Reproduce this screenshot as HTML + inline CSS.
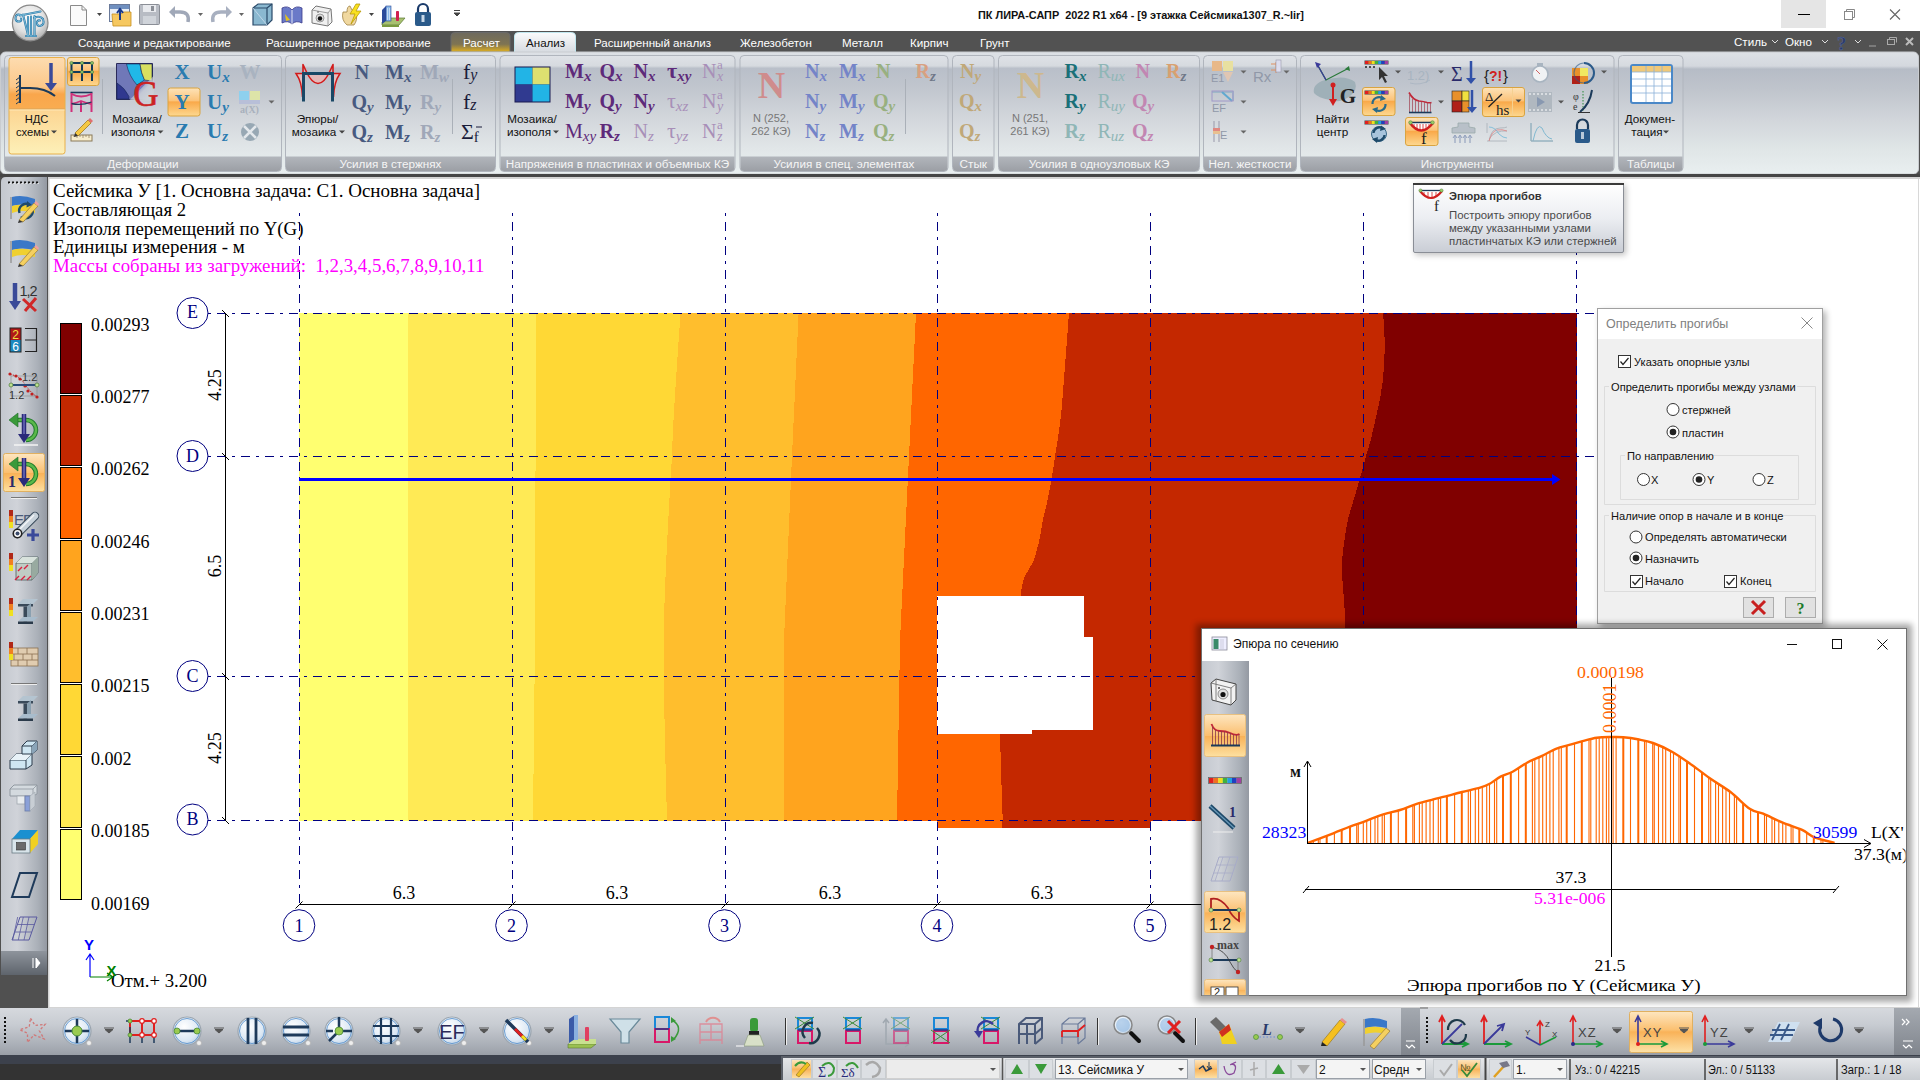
<!DOCTYPE html>
<html><head><meta charset="utf-8">
<style>
*{margin:0;padding:0;box-sizing:border-box}
html,body{width:1920px;height:1080px;overflow:hidden;background:#505050;font-family:"Liberation Sans",sans-serif;position:relative}
.a{position:absolute}
svg{position:absolute;overflow:visible}

</style></head>
<body>
<svg style="left:0;top:0" width="1920" height="180" viewBox="0 0 1920 180">
<defs>
<linearGradient id="gRib" x1="0" y1="0" x2="0" y2="1">
<stop offset="0" stop-color="#dde1e6"/><stop offset="0.115" stop-color="#d4d8de"/><stop offset="0.14" stop-color="#b6bcc6"/><stop offset="0.3" stop-color="#bfc4cc"/><stop offset="0.56" stop-color="#d2d6db"/><stop offset="0.8" stop-color="#e0e6e7"/><stop offset="1" stop-color="#e9eff0"/></linearGradient>
<linearGradient id="gGrp" x1="0" y1="0" x2="0" y2="1">
<stop offset="0" stop-color="#dfe2e7"/><stop offset="0.09" stop-color="#d6dadf"/><stop offset="0.11" stop-color="#b9bfc9"/><stop offset="0.28" stop-color="#c1c6ce"/><stop offset="0.55" stop-color="#d3d7dc"/><stop offset="0.8" stop-color="#e1e6e8"/><stop offset="1" stop-color="#e8eeef"/></linearGradient>
<linearGradient id="gLab" x1="0" y1="0" x2="0" y2="1">
<stop offset="0" stop-color="#b2b6bc"/><stop offset="1" stop-color="#9c9fa5"/></linearGradient>
<linearGradient id="gOr" x1="0" y1="0" x2="0" y2="1">
<stop offset="0" stop-color="#fde3b8"/><stop offset="0.45" stop-color="#fbc37a"/><stop offset="0.5" stop-color="#f9a94a"/><stop offset="1" stop-color="#fdd890"/></linearGradient>
<linearGradient id="gOrBig" x1="0" y1="0" x2="0" y2="1">
<stop offset="0" stop-color="#fddcb0"/><stop offset="0.3" stop-color="#fcc88a"/><stop offset="0.38" stop-color="#f9a64c"/><stop offset="0.53" stop-color="#f9ac50"/><stop offset="0.54" stop-color="#fcd592"/><stop offset="1" stop-color="#fdf0b8"/></linearGradient>
<linearGradient id="gTabR" x1="0" y1="0" x2="0" y2="1">
<stop offset="0" stop-color="#6e6a5e"/><stop offset="0.6" stop-color="#7f7452"/><stop offset="1" stop-color="#e0b020"/></linearGradient>
<linearGradient id="gTabA" x1="0" y1="0" x2="0" y2="1">
<stop offset="0" stop-color="#fafbfc"/><stop offset="1" stop-color="#d5d9df"/></linearGradient>
</defs>
<rect x="0" y="0" width="1920" height="31" fill="#fff"/>
<rect x="1781" y="0" width="45" height="28" fill="#e5e5e5"/>
<path d="M1798 14.5H1810" stroke="#000" stroke-width="1"/>
<rect x="1844.5" y="11.5" width="8" height="8" fill="none" stroke="#888"/><path d="M1846.5 11.5V9.5H1854.5V17.5H1852.5" fill="none" stroke="#888"/>
<path d="M1890 9.5L1900 19.5M1900 9.5L1890 19.5" stroke="#666" stroke-width="1.1"/>
<text x="978" y="19" font-family="Liberation Sans" font-weight="bold" font-size="10.8" fill="#111" textLength="326" lengthAdjust="spacingAndGlyphs" xml:space="preserve">ПК ЛИРА-САПР  2022 R1 x64 - [9 этажка Сейсмика1307_R.~lir]</text>
<rect x="0" y="31" width="1920" height="21" fill="#525252"/>
<path d="M451 52V36Q451 32.5 455 32.5H506Q510 32.5 510 36V52Z" fill="url(#gTabR)" stroke="#6a6a6a"/>
<path d="M514.5 53V36Q514.5 32.5 518.5 32.5H571.5Q575.5 32.5 575.5 36V53Z" fill="url(#gTabA)" stroke="#bfe6ee"/>
<text x="78" y="47" font-family="Liberation Sans" font-size="11.6" fill="#fff">Создание и редактирование</text>
<text x="266" y="47" font-family="Liberation Sans" font-size="11.6" fill="#fff">Расширенное редактирование</text>
<text x="463" y="47" font-family="Liberation Sans" font-size="11.6" fill="#fff">Расчет</text>
<text x="526" y="47" font-family="Liberation Sans" font-size="11.6" fill="#111">Анализ</text>
<text x="594" y="47" font-family="Liberation Sans" font-size="11.6" fill="#fff">Расширенный анализ</text>
<text x="740" y="47" font-family="Liberation Sans" font-size="11.6" fill="#fff">Железобетон</text>
<text x="842" y="47" font-family="Liberation Sans" font-size="11.6" fill="#fff">Металл</text>
<text x="910" y="47" font-family="Liberation Sans" font-size="11.6" fill="#fff">Кирпич</text>
<text x="980" y="47" font-family="Liberation Sans" font-size="11.6" fill="#fff">Грунт</text>
<text x="1734" y="46" font-family="Liberation Sans" font-size="11.6" fill="#fff">Стиль</text>
<text x="1785" y="46" font-family="Liberation Sans" font-size="11.6" fill="#fff">Окно</text>
<path d="M1772 40L1775 43L1778 40M1822 40L1825 43L1828 40M1855 40L1858 43L1861 40" fill="none" stroke="#ddd" stroke-width="1"/>
<text x="1837" y="49.5" font-family="Liberation Serif" font-weight="bold" font-size="19" fill="#2a3a6a" stroke="#5a6a9a" stroke-width="0.5">?</text>
<path d="M1869 46H1876" stroke="#888" stroke-width="1.5"/><rect x="1887.5" y="39.5" width="7" height="5" fill="none" stroke="#aaa"/><path d="M1889.5 39.5V37.5H1896.5V42.5" fill="none" stroke="#aaa"/>
<path d="M1906 38L1913 45M1913 38L1906 45" stroke="#bbb" stroke-width="2"/>
<rect x="0.5" y="52" width="1918" height="122" rx="5" fill="url(#gRib)" stroke="#c9ccd0"/>
<rect x="0" y="174" width="1920" height="4" fill="#454545"/>
<rect x="4.5" y="55.5" width="277.0" height="116" rx="4" fill="url(#gGrp)" stroke="#b0b5bd"/>
<path d="M5.0 156.5H281.0V167.5Q281.0 171 277.5 171H8.5Q5.0 171 5.0 167.5Z" fill="url(#gLab)"/>
<text x="143.0" y="168" text-anchor="middle" font-family="Liberation Sans" font-size="11.7" fill="#f5f5f5">Деформации</text>
<rect x="285.5" y="55.5" width="210.0" height="116" rx="4" fill="url(#gGrp)" stroke="#b0b5bd"/>
<path d="M286.0 156.5H495.0V167.5Q495.0 171 491.5 171H289.5Q286.0 171 286.0 167.5Z" fill="url(#gLab)"/>
<text x="390.5" y="168" text-anchor="middle" font-family="Liberation Sans" font-size="11.7" fill="#f5f5f5">Усилия в стержнях</text>
<rect x="500" y="55.5" width="235" height="116" rx="4" fill="url(#gGrp)" stroke="#b0b5bd"/>
<path d="M500.5 156.5H734.5V167.5Q734.5 171 731 171H504Q500.5 171 500.5 167.5Z" fill="url(#gLab)"/>
<text x="617.5" y="168" text-anchor="middle" font-family="Liberation Sans" font-size="11.7" fill="#f5f5f5">Напряжения в пластинах и объемных КЭ</text>
<rect x="740" y="55.5" width="208" height="116" rx="4" fill="url(#gGrp)" stroke="#b0b5bd"/>
<path d="M740.5 156.5H947.5V167.5Q947.5 171 944 171H744Q740.5 171 740.5 167.5Z" fill="url(#gLab)"/>
<text x="844.0" y="168" text-anchor="middle" font-family="Liberation Sans" font-size="11.7" fill="#f5f5f5">Усилия в спец. элементах</text>
<rect x="952.5" y="55.5" width="41.5" height="116" rx="4" fill="url(#gGrp)" stroke="#b0b5bd"/>
<path d="M953.0 156.5H993.5V167.5Q993.5 171 990 171H956.5Q953.0 171 953.0 167.5Z" fill="url(#gLab)"/>
<text x="973.25" y="168" text-anchor="middle" font-family="Liberation Sans" font-size="11.7" fill="#f5f5f5">Стык</text>
<rect x="998.5" y="55.5" width="201.0" height="116" rx="4" fill="url(#gGrp)" stroke="#b0b5bd"/>
<path d="M999.0 156.5H1199.0V167.5Q1199.0 171 1195.5 171H1002.5Q999.0 171 999.0 167.5Z" fill="url(#gLab)"/>
<text x="1099.0" y="168" text-anchor="middle" font-family="Liberation Sans" font-size="11.7" fill="#f5f5f5">Усилия в одноузловых КЭ</text>
<rect x="1203.5" y="55.5" width="93.0" height="116" rx="4" fill="url(#gGrp)" stroke="#b0b5bd"/>
<path d="M1204.0 156.5H1296.0V167.5Q1296.0 171 1292.5 171H1207.5Q1204.0 171 1204.0 167.5Z" fill="url(#gLab)"/>
<text x="1250.0" y="168" text-anchor="middle" font-family="Liberation Sans" font-size="11.7" fill="#f5f5f5">Нел. жесткости</text>
<rect x="1300.5" y="55.5" width="313.5" height="116" rx="4" fill="url(#gGrp)" stroke="#b0b5bd"/>
<path d="M1301.0 156.5H1613.5V167.5Q1613.5 171 1610 171H1304.5Q1301.0 171 1301.0 167.5Z" fill="url(#gLab)"/>
<text x="1457.25" y="168" text-anchor="middle" font-family="Liberation Sans" font-size="11.7" fill="#f5f5f5">Инструменты</text>
<rect x="1618.5" y="55.5" width="64.5" height="116" rx="4" fill="url(#gGrp)" stroke="#b0b5bd"/>
<path d="M1619.0 156.5H1682.5V167.5Q1682.5 171 1679 171H1622.5Q1619.0 171 1619.0 167.5Z" fill="url(#gLab)"/>
<text x="1650.75" y="168" text-anchor="middle" font-family="Liberation Sans" font-size="11.7" fill="#f5f5f5">Таблицы</text>
<rect x="9" y="57.5" width="56" height="96.5" rx="2.5" fill="url(#gOrBig)" stroke="#e8b04a"/>
<path d="M9.5 109H64.5" stroke="#d8a45a" stroke-width="1"/><path d="M9.5 110H64.5" stroke="#fde8b8" stroke-width="1"/>
<path d="M20 75V103" stroke="#1b3a5a" stroke-width="2"/>
<path d="M20 77L16 80M20 81L16 84M20 85L16 88M20 89L16 92M20 93L16 96M20 97L16 100M20 101L16 104" stroke="#1b3a5a" stroke-width="1"/>
<path d="M20 88H30Q45 88 55 96" fill="none" stroke="#1b3a5a" stroke-width="2.2"/>
<path d="M51 63V85" stroke="#3a4a9a" stroke-width="3.5"/><path d="M45 83L51 91L57 83Z" fill="#3a4a9a"/>
<text x="36.5" y="122.5" text-anchor="middle" font-family="Liberation Sans" font-size="11.2" fill="#111">НДС</text>
<text x="32.5" y="135.5" text-anchor="middle" font-family="Liberation Sans" font-size="11.2" fill="#111">схемы</text>
<path d="M51 130.5H57L54 133.5Z" fill="#444"/>
<rect x="67.5" y="57.5" width="31.5" height="28" rx="2.5" fill="url(#gOr)" stroke="#d9a441"/>
<path d="M71 63H92M71 72H92M71.5 63V81M82 63V81M92 63V81" fill="none" stroke="#133a5a" stroke-width="2"/>
<circle cx="71.5" cy="63" r="1.6" fill="#8fbf6a" stroke="#4a7a3a" stroke-width="0.6"/>
<circle cx="82" cy="63" r="1.6" fill="#8fbf6a" stroke="#4a7a3a" stroke-width="0.6"/>
<circle cx="92" cy="63" r="1.6" fill="#8fbf6a" stroke="#4a7a3a" stroke-width="0.6"/>
<circle cx="71.5" cy="72" r="1.6" fill="#8fbf6a" stroke="#4a7a3a" stroke-width="0.6"/>
<circle cx="82" cy="72" r="1.6" fill="#8fbf6a" stroke="#4a7a3a" stroke-width="0.6"/>
<circle cx="92" cy="72" r="1.6" fill="#8fbf6a" stroke="#4a7a3a" stroke-width="0.6"/>
<path d="M70.5 92.5H92.5" stroke="#1b3a5a" stroke-width="1.6"/>
<path d="M71.5 93V112M91.5 93V112M81 101V112" fill="none" stroke="#d0307a" stroke-width="2"/><path d="M71.5 94Q81 99 91.5 94M71.5 104Q76 103 81 101Q86 103 91.5 104" fill="none" stroke="#d0307a" stroke-width="1.8"/>
<path d="M71.5 103.5Q81 106 91.5 102" fill="none" stroke="#1b3a5a" stroke-width="1.3"/>
<rect x="71" y="135" width="21" height="6" fill="#f6eccc" stroke="#8a7a5a" stroke-width="1"/>
<path d="M74 135V137M77 135V138M80 135V137M83 135V138M86 135V137M89 135V138" stroke="#8a7a5a" stroke-width="0.7"/>
<path d="M75 133L88 120L91 123L78 136Z" fill="#f5c842" stroke="#a07a20" stroke-width="0.8"/><path d="M88 120L90 118L93 121L91 123Z" fill="#e07070"/><path d="M75 133L74 137L78 136Z" fill="#333"/>
<path d="M102.5 79V134" stroke="#aab0b8" stroke-width="1"/>
<defs><linearGradient id="gMosF" x1="0.3" y1="0.3" x2="0.85" y2="0.85"><stop offset="0" stop-color="#cdd2d8" stop-opacity="0"/><stop offset="0.55" stop-color="#cdd2d8" stop-opacity="0.9"/><stop offset="1" stop-color="#cdd2d8" stop-opacity="1"/></linearGradient></defs>
<path d="M116.5 63.5H152.5V99.5H116.5Z" fill="#7078b8" stroke="#2a2a5a" stroke-width="1"/>
<path d="M126.5 64H140Q141 73 144.5 80L137 85Q129 76 126.5 64Z" fill="#20b8e8" stroke="#1a2a5a" stroke-width="0.6"/>
<path d="M140 64H152V81L144.5 80Q141 73 140 64Z" fill="#d8e060" stroke="#1a2a5a" stroke-width="0.6"/>
<path d="M117 83Q125 88 129 96.5V99H117Z" fill="#30388f" stroke="#1a2a5a" stroke-width="0.6"/>
<path d="M129 100.5L153.5 76V100.5Z" fill="url(#gMosF)"/>
<text x="146" y="105.5" text-anchor="middle" font-family="Liberation Serif" font-size="35" fill="#cc2222" stroke="#cc2222" stroke-width="0.6">G</text>
<text x="137" y="122.5" text-anchor="middle" font-family="Liberation Sans" font-size="11.7" fill="#111">Мозаика/</text>
<text x="133" y="135.5" text-anchor="middle" font-family="Liberation Sans" font-size="11.7" fill="#111">изополя</text>
<path d="M157.5 130.5H163.5L160.5 133.5Z" fill="#444"/>
<rect x="168.0" y="88.0" width="32.0" height="28.0" rx="2.5" fill="url(#gOr)" stroke="#d9a441"/>
<text x="182" y="79" font-family="Liberation Serif" font-weight="bold" font-size="21" fill="#2a7bb0" text-anchor="middle">X</text>
<text x="182" y="108.5" font-family="Liberation Serif" font-weight="bold" font-size="21" fill="#2a7bb0" text-anchor="middle">Y</text>
<text x="182" y="138" font-family="Liberation Serif" font-weight="bold" font-size="21" fill="#2a7bb0" text-anchor="middle">Z</text>
<text x="207" y="79" font-family="Liberation Serif" font-weight="bold" font-size="21" fill="#2a7bb0" text-anchor="start">U<tspan font-style="italic" font-size="15" dy="3" fill="#2a7bb0">x</tspan></text>
<text x="207" y="108.5" font-family="Liberation Serif" font-weight="bold" font-size="21" fill="#2a7bb0" text-anchor="start">U<tspan font-style="italic" font-size="15" dy="3" fill="#2a7bb0">y</tspan></text>
<text x="207" y="138" font-family="Liberation Serif" font-weight="bold" font-size="21" fill="#2a7bb0" text-anchor="start">U<tspan font-style="italic" font-size="15" dy="3" fill="#2a7bb0">z</tspan></text>
<text x="250" y="79" font-family="Liberation Serif" font-weight="bold" font-size="21" fill="#a9b3c0" text-anchor="middle">W</text>
<rect x="239" y="91" width="10" height="9" fill="#8ed0ee"/><rect x="250" y="91" width="10" height="9" fill="#dde4a8"/><rect x="239" y="100" width="21" height="4" fill="#b8bfd8"/>
<text x="249.5" y="113" text-anchor="middle" font-family="Liberation Serif" font-weight="bold" font-size="10" fill="#a8b0bc">a(X)</text>
<circle cx="250" cy="132" r="9" fill="#98a8b4"/><path d="M244 126L256 138M256 126L244 138" stroke="#e4e8ec" stroke-width="2.5"/>
<path d="M268.5 100.5H274.5L271.5 103.5Z" fill="#666"/>
<path d="M306 73.5Q312 83.5 318 83.5Q324 83.5 330 73.5Z" fill="#e4b8b8"/><path d="M296 73.5H303V96Q302 82 296 73.5Z" fill="#e4c0c0"/><path d="M339.5 73.5H332.5V96Q334 82 339.5 73.5Z" fill="#e4c0c0"/>
<path d="M303 73V64.5L306.5 72Q312 83.5 318 83.5Q324 83.5 329.5 72L333 64.5V73" fill="none" stroke="#d21a1a" stroke-width="1.6" stroke-linejoin="round"/>
<path d="M303 73.5H296Q302 82 302.5 97M333 73.5H340Q334 82 333.5 97" fill="none" stroke="#d21a1a" stroke-width="1.5"/>
<path d="M303.5 101.5V73.5H332.5V101.5" fill="none" stroke="#1a4866" stroke-width="3"/>
<text x="317.5" y="122.5" text-anchor="middle" font-family="Liberation Sans" font-size="11.7" fill="#111">Эпюры/</text>
<text x="314" y="135.5" text-anchor="middle" font-family="Liberation Sans" font-size="11.7" fill="#111">мозаика</text>
<path d="M339 130.5H345L342 133.5Z" fill="#444"/>
<text x="362" y="78.5" font-family="Liberation Serif" font-weight="bold" font-size="20" fill="#485a80" text-anchor="middle">N</text>
<text x="351.5" y="109" font-family="Liberation Serif" font-weight="bold" font-size="20" fill="#485a80" text-anchor="start">Q<tspan font-style="italic" font-size="15" dy="3" fill="#485a80">y</tspan></text>
<text x="351.5" y="139" font-family="Liberation Serif" font-weight="bold" font-size="20" fill="#485a80" text-anchor="start">Q<tspan font-style="italic" font-size="15" dy="3" fill="#485a80">z</tspan></text>
<text x="385" y="78.5" font-family="Liberation Serif" font-weight="bold" font-size="20" fill="#485a80" text-anchor="start">M<tspan font-style="italic" font-size="15" dy="3" fill="#485a80">x</tspan></text>
<text x="385" y="109" font-family="Liberation Serif" font-weight="bold" font-size="20" fill="#485a80" text-anchor="start">M<tspan font-style="italic" font-size="15" dy="3" fill="#485a80">y</tspan></text>
<text x="385" y="139" font-family="Liberation Serif" font-weight="bold" font-size="20" fill="#485a80" text-anchor="start">M<tspan font-style="italic" font-size="15" dy="3" fill="#485a80">z</tspan></text>
<text x="420" y="78.5" font-family="Liberation Serif" font-weight="bold" font-size="20" fill="#a0a8b8" text-anchor="start">M<tspan font-style="italic" font-size="15" dy="3" fill="#a0a8b8">w</tspan></text>
<text x="420" y="109" font-family="Liberation Serif" font-weight="bold" font-size="20" fill="#a0a8b8" text-anchor="start">R<tspan font-style="italic" font-size="15" dy="3" fill="#a0a8b8">y</tspan></text>
<text x="420" y="139" font-family="Liberation Serif" font-weight="bold" font-size="20" fill="#a0a8b8" text-anchor="start">R<tspan font-style="italic" font-size="15" dy="3" fill="#a0a8b8">z</tspan></text>
<path d="M452.5 79V134" stroke="#aab0b8" stroke-width="1"/>
<text x="463" y="79" font-family="Liberation Serif" font-size="22" fill="#1a1c3a">f<tspan font-style="italic" font-size="16" dy="1">y</tspan></text>
<text x="463" y="109" font-family="Liberation Serif" font-size="22" fill="#1a1c3a">f<tspan font-style="italic" font-size="16" dy="1">z</tspan></text>
<text x="461" y="139" font-family="Liberation Serif" font-size="22" fill="#1a1c3a">Σ<tspan font-size="15" dy="3">f</tspan></text><path d="M476 127H482" stroke="#1a1c3a" stroke-width="1"/>
<rect x="514.5" y="66.5" width="36" height="36" fill="#1a1a50"/>
<rect x="515.5" y="67.5" width="17" height="17" fill="#22b4e6"/><rect x="532.5" y="67.5" width="17" height="17" fill="#dde070"/><rect x="515.5" y="84.5" width="17" height="17" fill="#303a90"/><rect x="532.5" y="84.5" width="17" height="17" fill="#22b4e6"/>
<text x="532" y="122.5" text-anchor="middle" font-family="Liberation Sans" font-size="11.7" fill="#111">Мозаика/</text>
<text x="529" y="135.5" text-anchor="middle" font-family="Liberation Sans" font-size="11.7" fill="#111">изополя</text>
<path d="M553 130.5H559L556 133.5Z" fill="#444"/>
<text x="565" y="78" font-family="Liberation Serif" font-weight="bold" font-size="20" fill="#5e2a7a" text-anchor="start">M<tspan font-style="italic" font-size="15" dy="3" fill="#5e2a7a">x</tspan></text>
<text x="565" y="108" font-family="Liberation Serif" font-weight="bold" font-size="20" fill="#5e2a7a" text-anchor="start">M<tspan font-style="italic" font-size="15" dy="3" fill="#5e2a7a">y</tspan></text>
<text x="565" y="138" font-family="Liberation Serif" font-weight="normal" font-size="20" fill="#5e2a7a" text-anchor="start">M<tspan font-style="italic" font-size="15" dy="3" fill="#5e2a7a">xy</tspan></text>
<text x="599.5" y="78" font-family="Liberation Serif" font-weight="bold" font-size="20" fill="#5e2a7a" text-anchor="start">Q<tspan font-style="italic" font-size="15" dy="3" fill="#5e2a7a">x</tspan></text>
<text x="599.5" y="108" font-family="Liberation Serif" font-weight="bold" font-size="20" fill="#5e2a7a" text-anchor="start">Q<tspan font-style="italic" font-size="15" dy="3" fill="#5e2a7a">y</tspan></text>
<text x="599.5" y="138" font-family="Liberation Serif" font-weight="bold" font-size="20" fill="#5e2a7a" text-anchor="start">R<tspan font-style="italic" font-size="15" dy="3" fill="#5e2a7a">z</tspan></text>
<text x="633.5" y="78" font-family="Liberation Serif" font-weight="bold" font-size="20" fill="#5e2a7a" text-anchor="start">N<tspan font-style="italic" font-size="15" dy="3" fill="#5e2a7a">x</tspan></text>
<text x="633.5" y="108" font-family="Liberation Serif" font-weight="bold" font-size="20" fill="#5e2a7a" text-anchor="start">N<tspan font-style="italic" font-size="15" dy="3" fill="#5e2a7a">y</tspan></text>
<text x="633.5" y="138" font-family="Liberation Serif" font-weight="normal" font-size="20" fill="#a88fb8" text-anchor="start">N<tspan font-style="italic" font-size="15" dy="3" fill="#a88fb8">z</tspan></text>
<text x="667" y="78" font-family="Liberation Serif" font-weight="bold" font-size="22" fill="#5e2a7a" text-anchor="start">τ<tspan font-style="italic" font-size="15" dy="3" fill="#5e2a7a">xy</tspan></text>
<text x="667" y="108" font-family="Liberation Serif" font-weight="normal" font-size="22" fill="#a88fb8" text-anchor="start">τ<tspan font-style="italic" font-size="15" dy="3" fill="#a88fb8">xz</tspan></text>
<text x="667" y="138" font-family="Liberation Serif" font-weight="normal" font-size="22" fill="#a88fb8" text-anchor="start">τ<tspan font-style="italic" font-size="15" dy="3" fill="#a88fb8">yz</tspan></text>
<text x="702" y="78" font-family="Liberation Serif" font-size="20" fill="#a88fb8">N</text><text x="717" y="69" font-family="Liberation Serif" font-size="13" fill="#a88fb8">a</text>
<text x="702" y="108" font-family="Liberation Serif" font-size="20" fill="#a88fb8">N</text><text x="717" y="99" font-family="Liberation Serif" font-size="13" fill="#a88fb8">a</text>
<text x="702" y="138" font-family="Liberation Serif" font-size="20" fill="#a88fb8">N</text><text x="717" y="129" font-family="Liberation Serif" font-size="13" fill="#a88fb8">a</text>
<text x="717" y="81" font-family="Liberation Serif" font-style="italic" font-size="14" fill="#a88fb8">x</text><text x="717" y="111" font-family="Liberation Serif" font-style="italic" font-size="14" fill="#a88fb8">y</text><text x="717" y="141" font-family="Liberation Serif" font-style="italic" font-size="14" fill="#a88fb8">z</text>
<text x="771.5" y="98" font-family="Liberation Serif" font-weight="bold" font-size="38" fill="#cf8c8c" text-anchor="middle">N</text>
<text x="771" y="122" text-anchor="middle" font-family="Liberation Sans" font-size="11" fill="#777">N (252,</text>
<text x="771" y="135" text-anchor="middle" font-family="Liberation Sans" font-size="11" fill="#777">262 КЭ)</text>
<text x="805" y="78" font-family="Liberation Serif" font-weight="bold" font-size="20" fill="#7484c8" text-anchor="start">N<tspan font-style="italic" font-size="15" dy="3" fill="#7484c8">x</tspan></text>
<text x="805" y="108" font-family="Liberation Serif" font-weight="bold" font-size="20" fill="#7484c8" text-anchor="start">N<tspan font-style="italic" font-size="15" dy="3" fill="#7484c8">y</tspan></text>
<text x="805" y="138" font-family="Liberation Serif" font-weight="bold" font-size="20" fill="#7484c8" text-anchor="start">N<tspan font-style="italic" font-size="15" dy="3" fill="#7484c8">z</tspan></text>
<text x="839" y="78" font-family="Liberation Serif" font-weight="bold" font-size="20" fill="#7484c8" text-anchor="start">M<tspan font-style="italic" font-size="15" dy="3" fill="#7484c8">x</tspan></text>
<text x="839" y="108" font-family="Liberation Serif" font-weight="bold" font-size="20" fill="#7484c8" text-anchor="start">M<tspan font-style="italic" font-size="15" dy="3" fill="#7484c8">y</tspan></text>
<text x="839" y="138" font-family="Liberation Serif" font-weight="bold" font-size="20" fill="#7484c8" text-anchor="start">M<tspan font-style="italic" font-size="15" dy="3" fill="#7484c8">z</tspan></text>
<text x="876" y="78" font-family="Liberation Serif" font-weight="bold" font-size="20" fill="#98b080" text-anchor="start">N</text>
<text x="873" y="108" font-family="Liberation Serif" font-weight="bold" font-size="20" fill="#98b080" text-anchor="start">Q<tspan font-style="italic" font-size="15" dy="3" fill="#98b080">y</tspan></text>
<text x="873" y="138" font-family="Liberation Serif" font-weight="bold" font-size="20" fill="#98b080" text-anchor="start">Q<tspan font-style="italic" font-size="15" dy="3" fill="#98b080">z</tspan></text>
<path d="M905.5 79V134" stroke="#aab0b8" stroke-width="1"/>
<text x="915.5" y="78" font-family="Liberation Serif" font-weight="bold" font-size="20" fill="#d8a080" text-anchor="start">R<tspan font-style="italic" font-size="15" dy="3" fill="#707888">z</tspan></text>
<text x="960" y="78" font-family="Liberation Serif" font-weight="bold" font-size="20" fill="#c0a878" text-anchor="start">N<tspan font-style="italic" font-size="15" dy="3" fill="#c0a878">y</tspan></text>
<text x="959" y="108" font-family="Liberation Serif" font-weight="bold" font-size="20" fill="#c0a878" text-anchor="start">Q<tspan font-style="italic" font-size="15" dy="3" fill="#c0a878">x</tspan></text>
<text x="959" y="138" font-family="Liberation Serif" font-weight="bold" font-size="20" fill="#c0a878" text-anchor="start">Q<tspan font-style="italic" font-size="15" dy="3" fill="#c0a878">z</tspan></text>
<text x="1030.5" y="98" font-family="Liberation Serif" font-weight="bold" font-size="38" fill="#cdb88e" text-anchor="middle">N</text>
<text x="1030" y="122" text-anchor="middle" font-family="Liberation Sans" font-size="11" fill="#777">N (251,</text>
<text x="1030" y="135" text-anchor="middle" font-family="Liberation Sans" font-size="11" fill="#777">261 КЭ)</text>
<text x="1064.5" y="78" font-family="Liberation Serif" font-weight="bold" font-size="20" fill="#1a7078" text-anchor="start">R<tspan font-style="italic" font-size="15" dy="3" fill="#1a7078">x</tspan></text>
<text x="1064.5" y="108" font-family="Liberation Serif" font-weight="bold" font-size="20" fill="#1a7078" text-anchor="start">R<tspan font-style="italic" font-size="15" dy="3" fill="#1a7078">y</tspan></text>
<text x="1064.5" y="138" font-family="Liberation Serif" font-weight="bold" font-size="20" fill="#8fb6b6" text-anchor="start">R<tspan font-style="italic" font-size="15" dy="3" fill="#8fb6b6">z</tspan></text>
<text x="1097.5" y="78" font-family="Liberation Serif" font-weight="normal" font-size="20" fill="#8fb6b6" text-anchor="start">R<tspan font-style="italic" font-size="15" dy="3" fill="#8fb6b6">ux</tspan></text>
<text x="1097.5" y="108" font-family="Liberation Serif" font-weight="normal" font-size="20" fill="#8fb6b6" text-anchor="start">R<tspan font-style="italic" font-size="15" dy="3" fill="#8fb6b6">uy</tspan></text>
<text x="1097.5" y="138" font-family="Liberation Serif" font-weight="normal" font-size="20" fill="#8fb6b6" text-anchor="start">R<tspan font-style="italic" font-size="15" dy="3" fill="#8fb6b6">uz</tspan></text>
<text x="1135.5" y="78" font-family="Liberation Serif" font-weight="bold" font-size="20" fill="#c286b2" text-anchor="start">N</text>
<text x="1132" y="108" font-family="Liberation Serif" font-weight="bold" font-size="20" fill="#c286b2" text-anchor="start">Q<tspan font-style="italic" font-size="15" dy="3" fill="#c286b2">y</tspan></text>
<text x="1132" y="138" font-family="Liberation Serif" font-weight="bold" font-size="20" fill="#c286b2" text-anchor="start">Q<tspan font-style="italic" font-size="15" dy="3" fill="#c286b2">z</tspan></text>
<text x="1166" y="78" font-family="Liberation Serif" font-weight="bold" font-size="20" fill="#d8a070" text-anchor="start">R<tspan font-style="italic" font-size="15" dy="3" fill="#707888">z</tspan></text>
<rect x="1212" y="61" width="10" height="10" fill="#e8b888"/><rect x="1223" y="61" width="10" height="10" fill="#e8e0a0"/><path d="M1223 72H1233L1228 82Z" fill="#f0c8a8" opacity="0.7"/>
<text x="1211" y="82" font-family="Liberation Sans" font-size="11" fill="#9098a8">E1</text>
<path d="M1240.5 70.5H1246.5L1243.5 73.5Z" fill="#666"/>
<text x="1253" y="82" font-family="Liberation Sans" font-size="15" fill="#9098a8">Rx</text><path d="M1271 64H1278M1271 70H1278M1276 62V73" fill="none" stroke="#e09060" stroke-width="1"/><rect x="1276" y="60" width="5" height="12" fill="#dde" stroke="#99a" stroke-width="0.6"/>
<path d="M1283.5 70.5H1289.5L1286.5 73.5Z" fill="#666"/>
<path d="M1212 92H1233V101" fill="none" stroke="#a0b8c8" stroke-width="2"/><path d="M1222 92L1232 101" stroke="#60a8d0" stroke-width="2"/><rect x="1212" y="91" width="21" height="10" fill="none" stroke="#a098c8" stroke-width="1"/>
<text x="1212" y="112" font-family="Liberation Sans" font-size="11" fill="#9098a8">EF</text>
<path d="M1240.5 100.5H1246.5L1243.5 103.5Z" fill="#666"/>
<path d="M1214 121V142M1219 121V142" stroke="#99a" stroke-width="1"/><rect x="1213" y="128" width="7" height="3" fill="#e08880"/><rect x="1213" y="131" width="7" height="3" fill="#e8c090"/>
<text x="1220" y="139" font-family="Liberation Sans" font-size="11" fill="#9098a8">E</text>
<path d="M1240.5 130.5H1246.5L1243.5 133.5Z" fill="#666"/>
<path d="M1314 93Q1312 84 1325 80Q1345 74 1355 82Q1358 90 1350 96Q1340 104 1330 100Q1318 98 1314 93Z" fill="#9fb0b8"/>
<path d="M1317 64L1326 80L1349 68" fill="none" stroke="#2a7a3a" stroke-width="1.3"/><path d="M1317 64L1326 80" stroke="#3a3a9a" stroke-width="1.3"/><path d="M1315 62L1321 64L1317 68Z" fill="#3a3a9a"/><path d="M1349 66L1350 71L1345 69Z" fill="#2a7a3a"/>
<circle cx="1333" cy="85" r="2.5" fill="#d02020"/><path d="M1333 85V101" stroke="#d02020" stroke-width="2"/><path d="M1329 99L1333 106L1337 99Z" fill="#d02020"/>
<text x="1348" y="103" text-anchor="middle" font-family="Liberation Serif" font-weight="bold" font-size="21" fill="#222">G</text>
<text x="1332.5" y="122.5" text-anchor="middle" font-family="Liberation Sans" font-size="11.7" fill="#111">Найти</text>
<text x="1332.5" y="135.5" text-anchor="middle" font-family="Liberation Sans" font-size="11.7" fill="#111">центр</text>
<rect x="1364.5" y="60.5" width="24" height="4" fill="#444"/>
<rect x="1365.0" y="61" width="3.2857142857142856" height="3" fill="#e02020"/>
<rect x="1368.2857142857142" y="61" width="3.2857142857142856" height="3" fill="#f07020"/>
<rect x="1371.5714285714287" y="61" width="3.2857142857142856" height="3" fill="#f0e020"/>
<rect x="1374.857142857143" y="61" width="3.2857142857142856" height="3" fill="#40b040"/>
<rect x="1378.142857142857" y="61" width="3.2857142857142856" height="3" fill="#20a0e0"/>
<rect x="1381.4285714285713" y="61" width="3.2857142857142856" height="3" fill="#2040c0"/>
<rect x="1384.7142857142858" y="61" width="3.2857142857142856" height="3" fill="#a040a0"/>
<path d="M1365 67H1367M1369 67H1371M1373 67H1375" stroke="#222" stroke-width="1.5"/><path d="M1379 67L1379 80L1382 77L1385 83L1387 82L1384 76L1388 76Z" fill="#333"/>
<path d="M1395 70.5H1401L1398 73.5Z" fill="#555"/>
<rect x="1362.5" y="87.5" width="32.5" height="28" rx="2.5" fill="url(#gOr)" stroke="#d9a441"/>
<rect x="1364.5" y="90.5" width="24" height="4" fill="#444"/>
<rect x="1365.0" y="91" width="3.2857142857142856" height="3" fill="#e02020"/>
<rect x="1368.2857142857142" y="91" width="3.2857142857142856" height="3" fill="#f07020"/>
<rect x="1371.5714285714287" y="91" width="3.2857142857142856" height="3" fill="#f0e020"/>
<rect x="1374.857142857143" y="91" width="3.2857142857142856" height="3" fill="#40b040"/>
<rect x="1378.142857142857" y="91" width="3.2857142857142856" height="3" fill="#20a0e0"/>
<rect x="1381.4285714285713" y="91" width="3.2857142857142856" height="3" fill="#2040c0"/>
<rect x="1384.7142857142858" y="91" width="3.2857142857142856" height="3" fill="#a040a0"/>
<path d="M1372.5 104A6.5 6.5 0 0 1 1383 98.5" fill="none" stroke="#2a6a8a" stroke-width="2.2"/><path d="M1381 95L1386 99L1380 101Z" fill="#2a6a8a"/><path d="M1385.5 104A6.5 6.5 0 0 1 1375 109.5" fill="none" stroke="#2a6a8a" stroke-width="2.2"/><path d="M1377 113L1372 109L1378 107Z" fill="#2a6a8a"/>
<rect x="1364.5" y="120.5" width="24" height="4" fill="#444"/>
<rect x="1365.0" y="121" width="3.2857142857142856" height="3" fill="#e02020"/>
<rect x="1368.2857142857142" y="121" width="3.2857142857142856" height="3" fill="#f07020"/>
<rect x="1371.5714285714287" y="121" width="3.2857142857142856" height="3" fill="#f0e020"/>
<rect x="1374.857142857143" y="121" width="3.2857142857142856" height="3" fill="#40b040"/>
<rect x="1378.142857142857" y="121" width="3.2857142857142856" height="3" fill="#20a0e0"/>
<rect x="1381.4285714285713" y="121" width="3.2857142857142856" height="3" fill="#2040c0"/>
<rect x="1384.7142857142858" y="121" width="3.2857142857142856" height="3" fill="#a040a0"/>
<circle cx="1379" cy="134" r="7.5" fill="#a8c4dc" stroke="#3a6a8a" stroke-width="1"/><path d="M1373.5 133A6 6 0 0 1 1383 128.5" fill="none" stroke="#1e4a6a" stroke-width="2.2"/><path d="M1381 125.5L1386 129L1380 131Z" fill="#1e4a6a"/><path d="M1384.5 135A6 6 0 0 1 1375 139.5" fill="none" stroke="#1e4a6a" stroke-width="2.2"/><path d="M1377 143L1372 139L1378 137Z" fill="#1e4a6a"/>
<text x="1407" y="80" font-family="Liberation Sans" font-size="13" fill="#a8b4c0">1.2)</text><path d="M1410 83Q1420 86 1430 80" fill="none" stroke="#a8b4c0" stroke-width="0.8"/>
<path d="M1438 70.5H1444L1441 73.5Z" fill="#555"/>
<path d="M1409 92.5Q1413 100 1419 101Q1424 101.5 1427 102.5Q1430 103 1431.5 102.5" fill="none" stroke="#c02838" stroke-width="1.6"/><path d="M1409.5 95V112M1412.5 99V112M1415.5 100.5V112M1418.5 101V112M1421.5 101.5V112M1424.5 102V112M1427.5 102.5V112M1430.5 102.5V112" stroke="#a04050" stroke-width="0.7"/><path d="M1409 112.5H1431.5" stroke="#1b3a5a" stroke-width="1.6"/>
<path d="M1438 100.5H1444L1441 103.5Z" fill="#555"/>
<rect x="1405.5" y="117.5" width="32.5" height="28" rx="2.5" fill="url(#gOr)" stroke="#d9a441"/>
<path d="M1410 123Q1421 138 1433 123" fill="#fff" stroke="#d02020" stroke-width="2.5"/><path d="M1410.5 122.5H1432.5" stroke="#1b3a5a" stroke-width="1.5"/>
<path d="M1414 124V128M1417 124V130M1420 124V131M1423 124V131M1426 124V130M1429 124V128" stroke="#d02020" stroke-width="0.8"/>
<circle cx="1410.5" cy="122.5" r="1.8" fill="#9c6" stroke="#4a7a3a" stroke-width="0.5"/><circle cx="1432.5" cy="122.5" r="1.8" fill="#9c6" stroke="#4a7a3a" stroke-width="0.5"/>
<text x="1421" y="144" font-family="Liberation Serif" font-size="17" fill="#222">f</text>
<text x="1451" y="81" font-family="Liberation Serif" font-size="20" fill="#2a2a6a">Σ</text><path d="M1471 61V80" stroke="#3050a8" stroke-width="2.5"/><path d="M1466 78L1471 84L1476 78Z" fill="#3050a8"/>
<rect x="1452" y="91" width="10" height="10" fill="#e8902a" stroke="#222" stroke-width="0.6"/><rect x="1462" y="91" width="7" height="10" fill="#f0e040" stroke="#222" stroke-width="0.6"/><rect x="1452" y="101" width="10" height="11" fill="#b02018" stroke="#222" stroke-width="0.6"/><rect x="1462" y="101" width="7" height="11" fill="#e8902a" stroke="#222" stroke-width="0.6"/>
<path d="M1472 90V109" stroke="#3050a8" stroke-width="2.5"/><path d="M1467 107L1472 113L1477 107Z" fill="#3050a8"/>
<path d="M1452 133H1475V128L1469 127V123H1458V127L1452 128Z" fill="#b8c0c8" stroke="#9aa" stroke-width="0.8"/><path d="M1455 143V136M1460 143V136M1465 143V136M1470 143V136" stroke="#8898b8" stroke-width="1"/><path d="M1453 138L1455 135L1457 138M1458 138L1460 135L1462 138M1463 138L1465 135L1467 138M1468 138L1470 135L1472 138" fill="none" stroke="#8898b8" stroke-width="0.9"/>
<text x="1484" y="81" font-family="Liberation Sans" font-size="15" fill="#222">{</text><text x="1489" y="81" font-family="Liberation Sans" font-weight="bold" font-size="14" fill="#d02020">?!</text><text x="1503" y="81" font-family="Liberation Sans" font-size="15" fill="#222">}</text>
<rect x="1482.5" y="87.5" width="42" height="29" rx="2.5" fill="url(#gOr)" stroke="#d9a441"/><path d="M1512.5 88V116" stroke="#f5d090" stroke-width="1"/>
<text x="1485" y="100.5" font-family="Liberation Serif" font-size="13" fill="#222">Δ</text><path d="M1488.5 107L1502 94" stroke="#222" stroke-width="1.3"/><text x="1496" y="114.5" font-family="Liberation Serif" font-size="15" fill="#222">hs</text>
<path d="M1515.5 99.5H1521.5L1518.5 102.5Z" fill="#444"/>
<path d="M1487 133V123M1487 141H1507M1489 141Q1491 128 1500 128Q1505 128 1507 127M1489 139Q1495 130 1507 131" fill="none" stroke="#a8b0b8" stroke-width="0.8"/><path d="M1489 141Q1492 131 1497 130Q1502 129 1507 131" fill="none" stroke="#e08080" stroke-width="0.8"/><path d="M1489 127Q1495 127 1499 134Q1503 138 1507 138" fill="none" stroke="#70b8d8" stroke-width="0.8"/>
<circle cx="1540" cy="74" r="8" fill="#f0f2f4" stroke="#a8b4c0" stroke-width="1.6"/><rect x="1537" y="63" width="6" height="3" fill="#a8b4c0"/><path d="M1540 74L1536 70" stroke="#d06060" stroke-width="1"/>
<rect x="1528" y="92" width="24" height="20" fill="#b0b8c0"/><path d="M1529 94H1551M1529 110H1551" stroke="#fff" stroke-width="1.2" stroke-dasharray="2 2"/><path d="M1537 97V107L1545 102Z" fill="#8898b0"/>
<path d="M1558 100.5H1564L1561 103.5Z" fill="#555"/>
<path d="M1531 141V123M1531 141H1553M1533 141Q1537 122 1542 128Q1546 138 1552 139" fill="none" stroke="#80b8d0" stroke-width="1"/><path d="M1531 141V123M1531 141H1553" fill="none" stroke="#a0a8b0" stroke-width="0.8"/>
<rect x="1572" y="68" width="8" height="8" fill="#e8902a"/><rect x="1580" y="68" width="8" height="8" fill="#f0e860"/><rect x="1572" y="76" width="8" height="8" fill="#b02018"/><rect x="1580" y="76" width="8" height="8" fill="#e8902a"/>
<path d="M1584 63A9 9 0 1 1 1584 83" fill="none" stroke="#2a5a8a" stroke-width="2"/><path d="M1584 63A9 9 0 0 0 1584 83" fill="none" stroke="#2a5a8a" stroke-width="1.2" opacity="0.6"/>
<path d="M1601 70.5H1607L1604 73.5Z" fill="#555"/>
<text x="1573" y="100" font-family="Liberation Serif" font-size="10" fill="#333">φ</text><text x="1573" y="110" font-family="Liberation Serif" font-size="10" fill="#333">e</text><path d="M1583 91V111" stroke="#2a8a3a" stroke-width="1" stroke-dasharray="1.5 1.5"/><path d="M1580 112Q1590 104 1592 90" fill="none" stroke="#1b3a5a" stroke-width="2"/><path d="M1578 112.5H1590" stroke="#333" stroke-width="1"/>
<path d="M1577 129V125A5.5 5.5 0 0 1 1588 125V129" fill="none" stroke="#1b3a5a" stroke-width="2.2"/><rect x="1575" y="129" width="15" height="14" rx="2" fill="#2a5a8a"/><rect x="1581" y="132" width="3" height="7" fill="#b8c8d8"/>
<rect x="1631" y="65" width="41" height="38" rx="2" fill="#fff" stroke="#4a88c8" stroke-width="2"/><rect x="1632" y="66" width="39" height="6" fill="#f0c878"/>
<path d="M1632 72H1671M1632 79H1671M1632 86H1671M1632 93H1671M1646 66V102M1654 66V102M1662 66V102" stroke="#8ab0d8" stroke-width="0.8"/>
<text x="1650" y="122.5" text-anchor="middle" font-family="Liberation Sans" font-size="11.7" fill="#111">Докумен-</text>
<text x="1647" y="135.5" text-anchor="middle" font-family="Liberation Sans" font-size="11.7" fill="#111">тация</text>
<path d="M1663 130.5H1669L1666 133.5Z" fill="#444"/>
<defs><radialGradient id="gLogo" cx="0.45" cy="0.35" r="0.7"><stop offset="0" stop-color="#ffffff"/><stop offset="0.6" stop-color="#e0e0e0"/><stop offset="1" stop-color="#a8a8a8"/></radialGradient></defs>
<circle cx="30.2" cy="23" r="17.8" fill="url(#gLogo)" stroke="#8a8a8a" stroke-width="1.2"/>
<path d="M21 15Q16 13 15.5 18Q15.5 22 19.5 21.5Q22 21 21 18.5M20 15.5L40.5 11.5M23 14.5L28 35M28 17V36M31 16.5V36M34.5 16V35M34 18Q40 15 43 19Q45 25 40 26Q36.5 26 37 22Q37.5 20 40 20.5M26 36H36" fill="none" stroke="#2a78a8" stroke-width="2.1" stroke-linecap="round"/>
<path d="M21 15Q16 13 15.5 18Q15.5 22 19.5 21.5Q22 21 21 18.5M20 15.5L40.5 11.5M23 14.5L28 35M28 17V36M31 16.5V36M34.5 16V35M34 18Q40 15 43 19Q45 25 40 26Q36.5 26 37 22Q37.5 20 40 20.5M26 36H36" fill="none" stroke="#8cc8e0" stroke-width="0.8" stroke-linecap="round"/>
<path d="M70.5 5.5H82L86.5 10V25.5H70.5Z" fill="#fafafa" stroke="#8a8a8a"/><path d="M82 5.5V10H86.5" fill="none" stroke="#8a8a8a"/>
<path d="M97 13H102L99.5 16Z" fill="#444"/>
<rect x="109.5" y="4.5" width="20" height="17" fill="#e8eef6" stroke="#6a7a9a"/><rect x="110" y="5" width="19" height="4" fill="#7090c0"/><path d="M113 26L112 14H121L123 12H131V26Z" fill="#f6c860" stroke="#c89020" stroke-width="0.8"/><path d="M120 20V10M117 13L120 9L123 13" fill="none" stroke="#1a3a8a" stroke-width="2"/>
<rect x="139.5" y="4.5" width="20" height="20" rx="1" fill="#b8bcc4" stroke="#8a8e96"/><rect x="143" y="5" width="13" height="7" fill="#e8eaee"/><rect x="143" y="16" width="13" height="8" fill="#d0d4da"/><rect x="151" y="6" width="3" height="5" fill="#8a8e96"/>
<path d="M188 22Q190 12 180 12H174" fill="none" stroke="#a0a8b8" stroke-width="3.5"/><path d="M175 6L169 12L175 18Z" fill="#a0a8b8"/>
<path d="M198 13H203L200.5 16Z" fill="#666"/>
<path d="M213 22Q211 12 221 12H227" fill="none" stroke="#a8b0c0" stroke-width="3.5"/><path d="M226 6L232 12L226 18Z" fill="#a8b0c0"/>
<path d="M239 13H244L241.5 16Z" fill="#666"/>
<path d="M253 8L258 4H272V20L267 25H253Z" fill="#8ab8d0" stroke="#2a4a6a" stroke-width="1.2"/><path d="M253 8H267V25M267 8L272 4" fill="none" stroke="#2a4a6a" stroke-width="1.2"/><path d="M253 8L267 25" stroke="#cde" stroke-width="0.8"/>
<path d="M282 8Q288 5 292 10Q296 5 302 8V23Q296 20 292 24Q288 20 282 23Z" fill="#6a7ac8" stroke="#3a3a8a" stroke-width="0.8"/><path d="M285 14L290 20L286 21Z" fill="#e0c020"/><path d="M292 10V24" stroke="#fff" stroke-width="0.8"/>
<path d="M312 10L316 6L331 9L332 22L328 26L312 23Z" fill="#f0f0f0" stroke="#777" stroke-width="1"/><path d="M312 10L328 13V26M328 13L331 9" fill="none" stroke="#888" stroke-width="0.8"/><circle cx="320" cy="18" r="4" fill="#ddd" stroke="#888" stroke-width="0.8"/><circle cx="320" cy="18.5" r="2.2" fill="#111"/><circle cx="318" cy="12" r="0.8" fill="#555"/>
<path d="M343 12Q341 20 347 25H354Q358 20 356 12L352 10L350 6Q347 6 347 12Z" fill="#f0d8a0" stroke="#a08040" stroke-width="0.8"/><path d="M356 4L350 14H355L351 24L361 11H356L360 4Z" fill="#f8e020" stroke="#b09000" stroke-width="0.7"/>
<path d="M369 13H374L371.5 16Z" fill="#444"/>
<path d="M382 22L388 18H405L399 25H382Z" fill="#a8c070" stroke="#5a7a30" stroke-width="0.7"/><path d="M382 25H399V27H382Z" fill="#7a9a40"/>
<path d="M382 10L386 6V21L382 24Z" fill="#2a4a9a"/><rect x="386" y="6" width="5" height="15" fill="#8ab8e8" stroke="#2a4a9a" stroke-width="0.6"/><path d="M387.5 8V20M389.5 8V20" stroke="#fff" stroke-width="0.5"/>
<rect x="396" y="11" width="3" height="10" rx="0.8" fill="#d02050"/>
<path d="M418 12V9A5 5 0 0 1 428 9V12" fill="none" stroke="#1a3a6a" stroke-width="2.2"/><rect x="415" y="12" width="16" height="14" rx="2" fill="#2a5a8a"/><rect x="421.5" y="15" width="3" height="7" fill="#c8d8e8"/>
<path d="M454 10.5H460M454 13H460L457 16Z" stroke="#444" fill="#444" stroke-width="1"/>
</svg>
<svg style="left:0;top:177px" width="50" height="831" viewBox="0 177 50 831">
<defs><linearGradient id="gLtb" x1="0" y1="0" x2="1" y2="0"><stop offset="0" stop-color="#c4c8cf"/><stop offset="0.35" stop-color="#d0d3d9"/><stop offset="0.8" stop-color="#aab0b8"/><stop offset="1" stop-color="#9499a2"/></linearGradient>
<linearGradient id="gOrL" x1="0" y1="0" x2="0" y2="1"><stop offset="0" stop-color="#fde6c0"/><stop offset="0.5" stop-color="#fbbf70"/><stop offset="0.52" stop-color="#f9b258"/><stop offset="1" stop-color="#fde0a0"/></linearGradient>
<linearGradient id="gBtm" x1="0" y1="0" x2="0" y2="1"><stop offset="0" stop-color="#8e949c"/><stop offset="1" stop-color="#5e646c"/></linearGradient></defs>
<rect x="0" y="177" width="50" height="831" fill="#505050"/>
<path d="M1 951V182Q1 177 6 177H47V951Z" fill="url(#gLtb)"/>
<rect x="1" y="951" width="46" height="24" fill="url(#gBtm)"/><path d="M33 958V968M36 958L40 963L36 968Z" fill="#fff" stroke="#fff" stroke-width="1"/>
<path d="M8 182.5H38" stroke="#111" stroke-width="2" stroke-dasharray="2 2"/><path d="M9 183.5H39" stroke="#fff" stroke-width="1" stroke-dasharray="2 2" opacity="0.6"/>
<path d="M11 197V219" stroke="#999" stroke-width="1.5"/>
<path d="M12 197Q22 194 35 199V206Q22 203 12 206Z" fill="#3a78c8"/>
<path d="M12 206Q22 203 35 207V213Q22 209 12 213Z" fill="#f0d030"/>
<path d="M19.5 213A7 7 0 0 1 29 204.5" fill="none" stroke="#1e4a6a" stroke-width="2.4"/><path d="M27 201L32 205L26.5 207.5Z" fill="#1e4a6a"/>
<path d="M32.5 209A7 7 0 0 1 23 217.5" fill="none" stroke="#1e4a6a" stroke-width="2.4"/><path d="M25 221L20 217L25.5 214.5Z" fill="#1e4a6a"/>
<path d="M19 220L34 203L38 206L23 222Z" fill="#f5d060" stroke="#9a7a30" stroke-width="0.7"/><path d="M34 203L36 201L39 204L38 206Z" fill="#f0a0a0"/><path d="M19 220L18 223L23 222Z" fill="#333"/>
<path d="M11 241V263" stroke="#999" stroke-width="1.5"/>
<path d="M12 241Q22 238 35 243V250Q22 247 12 250Z" fill="#3a78c8"/>
<path d="M12 250Q22 247 35 251V257Q22 253 12 257Z" fill="#f0d030"/>
<path d="M19 264L34 247L38 250L23 266Z" fill="#f5d060" stroke="#9a7a30" stroke-width="0.7"/><path d="M34 247L36 245L39 248L38 250Z" fill="#f0a0a0"/><path d="M19 264L18 267L23 266Z" fill="#333"/>
<path d="M15 283V303" stroke="#3a4a98" stroke-width="4.5"/><path d="M9 301L15 310L21 301Z" fill="#3a4a98"/>
<text x="19.5" y="295.5" font-family="Liberation Sans" font-size="14.5" fill="#333" letter-spacing="-1">1,2</text><path d="M23 299L36 311M36 298L25 311" stroke="#d02828" stroke-width="3"/>
<rect x="10" y="328" width="11" height="12" fill="#b01818"/><rect x="10" y="340" width="11" height="12" fill="#1a88c0"/><rect x="10" y="328" width="11" height="24" fill="none" stroke="#222" stroke-width="1"/>
<text x="15.5" y="338.5" text-anchor="middle" font-family="Liberation Sans" font-size="12" fill="#f0e040">2</text><text x="15.5" y="350.5" text-anchor="middle" font-family="Liberation Sans" font-size="12" fill="#fff">6</text>
<path d="M25 328.5H36.5V351.5H25M25 340H36.5" fill="none" stroke="#222" stroke-width="1.2"/>
<rect x="11" y="376" width="26" height="20" fill="none" stroke="#8a8a8a" stroke-width="0.6"/>
<path d="M10 374L16 376L22 380L26 386L32 393L37 397" fill="none" stroke="#c02020" stroke-width="1" stroke-dasharray="1.5 1.5"/>
<circle cx="10" cy="374" r="1.6" fill="#c02020"/>
<circle cx="16" cy="376" r="1.6" fill="#c02020"/>
<circle cx="20" cy="379" r="1.6" fill="#c02020"/>
<circle cx="25" cy="386" r="1.6" fill="#c02020"/>
<circle cx="28" cy="391" r="1.6" fill="#c02020"/>
<circle cx="32" cy="394" r="1.6" fill="#c02020"/>
<circle cx="37" cy="397" r="1.6" fill="#c02020"/>
<path d="M11 385H37" stroke="#2a4a7a" stroke-width="2"/><circle cx="11" cy="385" r="2" fill="#bde090" stroke="#4a7a3a" stroke-width="0.7"/><circle cx="37" cy="385" r="2" fill="#bde090" stroke="#4a7a3a" stroke-width="0.7"/>
<text x="22" y="381" font-family="Liberation Sans" font-size="11" fill="#333">1.2</text><text x="9" y="398.5" font-family="Liberation Sans" font-size="11" fill="#333">1.2</text>
<path d="M17 420H26A10 10 0 0 1 26 440" fill="none" stroke="#1e7a2a" stroke-width="4.5"/><path d="M17 420H26A10 10 0 0 1 26 440" fill="none" stroke="#5ab84a" stroke-width="2.5"/><path d="M9 420L18 413V427Z" fill="#3a9a3a" stroke="#1e6a2a" stroke-width="0.6"/>
<path d="M24 414V437" stroke="#2a2a7a" stroke-width="4.5"/><path d="M24 414V437" stroke="#8a8ad8" stroke-width="1"/><path d="M18 434L24 443L30 434Z" fill="#2a2a7a"/>
<path d="M14 445H38" stroke="#f4f4f4" stroke-width="1.5"/>
<rect x="3.5" y="453.5" width="41" height="38" rx="2" fill="url(#gOrL)" stroke="#e0b060"/>
<path d="M17 464H26A10 10 0 0 1 26 484" fill="none" stroke="#1e7a2a" stroke-width="4.5"/><path d="M17 464H26A10 10 0 0 1 26 484" fill="none" stroke="#5ab84a" stroke-width="2.5"/><path d="M9 464L18 457V471Z" fill="#3a9a3a" stroke="#1e6a2a" stroke-width="0.6"/>
<path d="M24 458V481" stroke="#2a2a7a" stroke-width="4.5"/><path d="M24 458V481" stroke="#8a8ad8" stroke-width="1"/><path d="M18 478L24 487L30 478Z" fill="#2a2a7a"/>
<text x="8" y="487" font-family="Liberation Serif" font-weight="bold" font-size="16" fill="#2a2a6a">1</text>
<path d="M11 497.5H37" stroke="#777" stroke-width="1"/><path d="M11 498.5H37" stroke="#eee" stroke-width="1"/>
<rect x="9" y="510" width="4" height="6" fill="#b02818"/><rect x="9" y="516" width="4" height="6" fill="#f08020"/><rect x="9" y="522" width="4" height="6" fill="#f0e020"/>
<text x="14" y="525" font-family="Liberation Sans" font-size="15" fill="#4a5a7a" letter-spacing="-1">EF</text>
<path d="M17 534L35 516" stroke="#3a4a5a" stroke-width="8.5" stroke-linecap="round"/><path d="M17 534L35 516" stroke="#c8d2da" stroke-width="6.5" stroke-linecap="round"/><path d="M19 530L34 515" stroke="#f4f6f8" stroke-width="1.5"/>
<circle cx="17.5" cy="533.5" r="4.2" fill="#fff" stroke="#222" stroke-width="1.6"/><circle cx="17.5" cy="533.5" r="2" fill="#3a4a6a"/><path d="M33 529V541M27 535H39" stroke="#3a4a9a" stroke-width="3.2"/>
<rect x="9" y="553" width="4" height="6" fill="#b02818"/><rect x="9" y="559" width="4" height="6" fill="#f08020"/><rect x="9" y="565" width="4" height="6" fill="#f0e020"/>
<path d="M16 563L22 557H38V573L32 580H16Z" fill="#c0ccc4" stroke="#4a5a5a" stroke-width="0.8"/><path d="M16 563H32L38 557M32 563V580" fill="none" stroke="#4a5a5a" stroke-width="0.8"/><path d="M32 563L38 557V573L32 580Z" fill="#98aaa0"/><path d="M16 563L22 557H38L32 563Z" fill="#d8e2dc"/>
<path d="M18 571L22 567M24 569L28 565M15 580L19 576M21 580L25 576M27 580L31 576" stroke="#d82040" stroke-width="1.4"/>
<rect x="9" y="598" width="4" height="6" fill="#b02818"/><rect x="9" y="604" width="4" height="6" fill="#f08020"/><rect x="9" y="610" width="4" height="6" fill="#f0e020"/>
<path d="M18 604L23 599H38L33 604Z" fill="#b4c4d0"/><rect x="18" y="604" width="15" height="2.5" fill="#3a4a5a"/>
<path d="M27 606.5L31 603V618L27 621.5Z" fill="#8aa0b0"/><rect x="23.5" y="606.5" width="3.5" height="15" fill="#3a4a5a"/>
<path d="M18 621.5L23 617H38L33 621.5Z" fill="#a8bccc"/><rect x="18" y="621.5" width="15" height="2.5" fill="#2a3a4a"/>
<rect x="9" y="642" width="4" height="6" fill="#b02818"/><rect x="9" y="648" width="4" height="6" fill="#f08020"/><rect x="9" y="654" width="4" height="6" fill="#f0e020"/>
<rect x="11" y="648" width="27" height="18" fill="#e0ccb0" stroke="#8a7050" stroke-width="0.8"/><path d="M11 654H38M11 660H38M18 648V654M27 648V654M14 654V660M23 654V660M32 654V660M18 660V666M27 660V666" stroke="#8a7050" stroke-width="0.8"/>
<rect x="9" y="642" width="4" height="6" fill="#b02818"/><rect x="9" y="648" width="4" height="6" fill="#f08020"/><rect x="9" y="654" width="4" height="6" fill="#f0e020"/>
<path d="M11 683.5H37" stroke="#777" stroke-width="1"/><path d="M11 684.5H37" stroke="#eee" stroke-width="1"/>
<path d="M18 701L23 696H38L33 701Z" fill="#b4c4d0"/><rect x="18" y="701" width="15" height="2.5" fill="#3a4a5a"/>
<path d="M27 703.5L31 700V715L27 718.5Z" fill="#8aa0b0"/><rect x="23.5" y="703.5" width="3.5" height="15" fill="#3a4a5a"/>
<path d="M18 718.5L23 714H38L33 718.5Z" fill="#a8bccc"/><rect x="18" y="718.5" width="15" height="2.5" fill="#2a3a4a"/>
<path d="M10 760L16 754H32V765L26 769H10Z" fill="#cfe6f2" stroke="#2a3a4a" stroke-width="1"/><path d="M10 760H26V769M26 760L32 754" fill="none" stroke="#2a3a4a" stroke-width="1"/><path d="M10 760L16 754H32L26 760Z" fill="#e8f2f8"/>
<path d="M22 746L27 741H37V750L32 754H22Z" fill="#cfe6f2" stroke="#2a3a4a" stroke-width="1"/><path d="M22 746H32V754M32 746L37 741" fill="none" stroke="#2a3a4a" stroke-width="1"/><path d="M32 746L37 741V750L32 754Z" fill="#8aa4b8"/>
<path d="M10 789L14 785H37V794L33 796H10Z" fill="#d4dadf" stroke="#9098a0" stroke-width="1"/><path d="M10 789H33V796M33 789L37 785" fill="none" stroke="#9098a0" stroke-width="0.8"/>
<rect x="17" y="796" width="8" height="8" fill="#e8ecef" stroke="#a0a8b0" stroke-width="0.8"/><rect x="25" y="796" width="5" height="15" fill="#8aa0d8" stroke="#6a7aa8" stroke-width="0.8"/><path d="M30 796L35 792V806L30 811Z" fill="#c8ced4" stroke="#a0a8b0" stroke-width="0.6"/>
<path d="M12 839L20 830H38L30 839Z" fill="#1a90d0"/><path d="M30 839L38 830V844L30 853Z" fill="#f0d020"/><rect x="12" y="839" width="18" height="14" fill="#d8e4ea" stroke="#6a7a84" stroke-width="0.8"/><rect x="16.5" y="842.5" width="9" height="7.5" fill="#6a6a6a" stroke="#333" stroke-width="0.6"/>
<path d="M12 897L20 873H37L29 897Z" fill="none" stroke="#1e3a5a" stroke-width="2"/>
<path d="M12 940L20 917H37L29 940Z" fill="none" stroke="#5a5aa0" stroke-width="1"/><path d="M14.7 932H31.7M17.3 924.5H34.3M17.7 917L12.7 940M23.3 917L18.3 940M29 917L24 940" stroke="#5a5aa0" stroke-width="0.8"/>
</svg>
<svg class="a" style="left:0;top:0" width="1920" height="1080" viewBox="0 0 1920 1080">
<rect x="48" y="177" width="1872" height="831" fill="#d4d4d4"/><rect x="49.5" y="179" width="1870.5" height="828" fill="#fff"/>
<path d="M1918.5 179V1007" stroke="#d8d8d8" stroke-width="1"/>
<g id="contour" shape-rendering="crispEdges">
<rect x="299" y="313" width="1278" height="508" fill="#800000"/>
<path d="M299 313H1383C1386 340 1386 380 1376 417C1372 435 1369 448 1366 456C1360 480 1352 505 1348 519C1343 545 1341 565 1342 575C1344 600 1346 620 1346 660C1348 720 1350 780 1350 821H299Z" fill="#c42800"/>
<path d="M299 313H1069L1063 392C1061 420 1058 440 1055 456C1052 480 1048 500 1043 519C1040 540 1037 550 1034 560C1030 568 1027 572 1025 576C1022 584 1021 590 1021 596L1000 734C1001 770 1002 800 1003 828H937V821H299Z" fill="#ff6600"/>
<path d="M299 313H916L909 456L900 640L897 821H299Z" fill="#ffa41e"/>
<path d="M299 313H798.6L792 456L784 640L784 821H299Z" fill="#ffbe2d"/>
<path d="M299 313H680.5C676 380 673 420 672 456C668 520 664 600 663.5 640C664 720 666 780 667 821H299Z" fill="#ffd835"/>
<path d="M299 313H536L535 640L533 821H299Z" fill="#ffea55"/>
<rect x="299" y="313" width="108.5" height="508" fill="#ffff70"/>
<rect x="1002" y="820" width="149" height="8" fill="#c42800"/>
<path d="M937 596H1083.7V636.8H1093V729.5H1032V733.7H937Z" fill="#fff"/>
</g>
<g stroke="#000080" stroke-width="1" fill="none" shape-rendering="crispEdges">
<path stroke-dasharray="3 6 9 6" d="M299.5 213V903M512.5 213V903M725.5 213V903M937.5 213V903M1150.5 213V903M1363.5 213V903M1576.5 213V903"/>
<path stroke-dasharray="9 6 3 6" d="M193 313.5H1598M193 456.5H1598M193 676.5H1598M193 820.5H1598"/>
</g>
<rect x="299" y="478" width="1253" height="3" fill="#0000ff"/>
<path d="M1552 474L1560.5 479.5L1552 485Z" fill="#0000ff"/>
<g stroke="#000" stroke-width="1" fill="none" shape-rendering="crispEdges"><path d="M225.5 313V821M299 904.5H1202"/></g>
<g stroke="#000" stroke-width="1" fill="none"><path d="M222 310L229 317"/><path d="M222 453L229 460"/><path d="M222 673L229 680"/><path d="M222 817L229 824"/><path d="M295.5 908.5L302.5 901.5"/><path d="M508.5 908.5L515.5 901.5"/><path d="M721.5 908.5L728.5 901.5"/><path d="M933.5 908.5L940.5 901.5"/><path d="M1146.5 908.5L1153.5 901.5"/></g>
<g stroke="#000080" stroke-width="1" fill="#fff">
<circle cx="192.5" cy="313" r="15.5"/><circle cx="192.5" cy="456" r="15.5"/><circle cx="192.5" cy="676" r="15.5"/><circle cx="192.5" cy="819.5" r="15.5"/>
<circle cx="299" cy="925.5" r="15.8"/><circle cx="511.5" cy="925.5" r="15.8"/><circle cx="724.5" cy="925.5" r="15.8"/><circle cx="937" cy="925.5" r="15.8"/><circle cx="1150" cy="925.5" r="15.8"/>
</g>
<g font-family="Liberation Serif" font-size="18" fill="#000080" text-anchor="middle">
<text x="192.5" y="318">E</text><text x="192.5" y="461.5">D</text><text x="192.5" y="681.5">C</text><text x="192.5" y="825">B</text>
<text x="299" y="931.5">1</text><text x="511.5" y="931.5">2</text><text x="724.5" y="931.5">3</text><text x="937" y="931.5">4</text><text x="1150" y="931.5">5</text>
</g>
<g font-family="Liberation Serif" font-size="18" fill="#000" text-anchor="middle">
<text x="404" y="899">6.3</text><text x="617" y="899">6.3</text><text x="830" y="899">6.3</text><text x="1042" y="899">6.3</text>
<text transform="translate(221,385) rotate(-90)">4.25</text>
<text transform="translate(221,566) rotate(-90)">6.5</text>
<text transform="translate(221,748) rotate(-90)">4.25</text>
</g>
<g id="legend" shape-rendering="crispEdges" stroke="#000" stroke-width="1"><rect x="60.5" y="323.5" width="21" height="70" fill="#800000"/><rect x="60.5" y="395.5" width="21" height="70" fill="#c42800"/><rect x="60.5" y="467.5" width="21" height="71" fill="#ff6600"/><rect x="60.5" y="540.5" width="21" height="70" fill="#ffa41e"/><rect x="60.5" y="612.5" width="21" height="70" fill="#ffbe2d"/><rect x="60.5" y="684.5" width="21" height="70" fill="#ffd835"/><rect x="60.5" y="756.5" width="21" height="71" fill="#ffea55"/><rect x="60.5" y="829.5" width="21" height="70" fill="#ffff70"/></g>
<g font-family="Liberation Serif" font-size="18" fill="#000">
<text x="91" y="331">0.00293</text><text x="91" y="403">0.00277</text><text x="91" y="475">0.00262</text><text x="91" y="548">0.00246</text><text x="91" y="620">0.00231</text><text x="91" y="692">0.00215</text><text x="91" y="765">0.002</text><text x="91" y="837">0.00185</text><text x="91" y="910">0.00169</text>
</g>
<g font-family="Liberation Serif" font-size="18" fill="#000">
<text x="53" y="197" textLength="427" lengthAdjust="spacingAndGlyphs">Сейсмика У [1. Основна задача: С1. Основна задача]</text>
<text x="53" y="215.7" textLength="133" lengthAdjust="spacingAndGlyphs">Составляющая 2</text>
<text x="53" y="234.5" textLength="250.5" lengthAdjust="spacingAndGlyphs">Изополя перемещений по Y(G)</text>
<text x="53" y="253.2" textLength="191.7" lengthAdjust="spacingAndGlyphs">Единицы измерения - м</text>
<text x="53" y="272" fill="#ff00ff" textLength="431.5" lengthAdjust="spacingAndGlyphs" xml:space="preserve">Массы собраны из загружений:  1,2,3,4,5,6,7,8,9,10,11</text>
<text x="111" y="987" textLength="96" lengthAdjust="spacingAndGlyphs">Отм.+ 3.200</text>
</g>
<g stroke-width="1.2" fill="none"><path d="M90 977V955M86 960L90 954L94 960" stroke="#0000ff"/><path d="M90 977H112M107 973L113 977L107 981" stroke="#008000"/></g>
<text x="84" y="950" font-family="Liberation Sans" font-weight="bold" font-size="15" fill="#0000ff">Y</text>
<text x="106.5" y="976" font-family="Liberation Sans" font-weight="bold" font-size="15" fill="#008000">X</text>
</svg>

<svg style="left:0;top:1005px" width="1920" height="75" viewBox="0 1005 1920 75">
<defs><linearGradient id="gBt" x1="0" y1="0" x2="0" y2="1"><stop offset="0" stop-color="#d6d9de"/><stop offset="0.35" stop-color="#c8ccd2"/><stop offset="0.8" stop-color="#a9aeb6"/><stop offset="1" stop-color="#9a9fa7"/></linearGradient>
<linearGradient id="gOrB" x1="0" y1="0" x2="0" y2="1"><stop offset="0" stop-color="#fde6c0"/><stop offset="0.45" stop-color="#fbc070"/><stop offset="0.5" stop-color="#f9b258"/><stop offset="1" stop-color="#fde2a8"/></linearGradient>
<linearGradient id="gSt" x1="0" y1="0" x2="0" y2="1"><stop offset="0" stop-color="#e4e6e9"/><stop offset="1" stop-color="#c8ccd1"/></linearGradient>
<linearGradient id="gGrip" x1="0" y1="0" x2="0" y2="1"><stop offset="0" stop-color="#a4a9b0"/><stop offset="1" stop-color="#80858d"/></linearGradient>
<radialGradient id="gLens" cx="0.4" cy="0.35" r="0.7"><stop offset="0" stop-color="#ffffff"/><stop offset="0.7" stop-color="#dce8f4"/><stop offset="1" stop-color="#b8cce0"/></radialGradient>
</defs>
<rect x="0" y="1055" width="1920" height="25" fill="#333"/>
<rect x="0" y="1055" width="1920" height="9" fill="#3c414c"/>
<rect x="0" y="1008" width="1920" height="47" fill="url(#gBt)"/>
<rect x="1401" y="1008" width="19" height="47" fill="url(#gGrip)"/><path d="M1406 1041H1415M1406 1045L1409 1048L1412 1045L1415 1048" fill="none" stroke="#fff" stroke-width="1.2"/>
<rect x="1894" y="1008" width="26" height="47" fill="url(#gGrip)"/><path d="M1902 1019L1905 1022L1902 1025M1906 1019L1909 1022L1906 1025M1903 1041H1913M1903 1045L1906 1048L1909 1045L1912 1048" fill="none" stroke="#fff" stroke-width="1.2"/>
<path d="M1420 1008H1428" stroke="#6a6a6a"/>
<path d="M5 1017V1043" stroke="#111" stroke-width="2" stroke-dasharray="2 2"/>
<path d="M1427 1017V1043" stroke="#111" stroke-width="2" stroke-dasharray="2 2"/>
<path d="M33 1018L36 1026L46 1027L39 1032L42 1041L33 1035L25 1041L27 1032L20 1027L30 1026Z" fill="none" stroke="#d07878" stroke-width="1.3" stroke-dasharray="2.5 2" transform="rotate(-12 33 1030)"/>
<circle cx="77" cy="1031" r="14" fill="url(#gLens)" stroke="#9aa4ae" stroke-width="1.2"/><circle cx="77" cy="1031" r="12.5" fill="none" stroke="#4a88c8" stroke-width="0.8"/><circle cx="89" cy="1043" r="2.5" fill="#eee" stroke="#aaa" stroke-width="0.6"/>
<path d="M77 1019V1043M65 1031H89" stroke="#1e3a5a" stroke-width="2.5"/><circle cx="77" cy="1031" r="5" fill="#9acb50" stroke="#4a8a3a" stroke-width="1"/>
<path d="M104 1028H114M105 1029.5H113L109 1033Z" fill="#555" stroke="#555" stroke-width="1"/>
<path d="M130 1021H154V1035H130ZM142 1021V1035" fill="none" stroke="#e02020" stroke-width="2"/><path d="M130 1027V1043M142 1035V1043M154 1035V1043" stroke="#1e3a5a" stroke-width="1.5"/><path d="M130 1021H126" stroke="#1e3a5a" stroke-width="1.5"/>
<circle cx="142" cy="1021" r="2.3" fill="#fff" stroke="#e02020" stroke-width="1.2"/>
<circle cx="154" cy="1021" r="2.3" fill="#fff" stroke="#e02020" stroke-width="1.2"/>
<circle cx="142" cy="1035" r="2.3" fill="#fff" stroke="#e02020" stroke-width="1.2"/>
<circle cx="154" cy="1035" r="2.3" fill="#fff" stroke="#e02020" stroke-width="1.2"/>
<circle cx="130" cy="1021" r="2" fill="#9acb50" stroke="#4a8a3a" stroke-width="0.8"/>
<circle cx="130" cy="1035" r="2" fill="#9acb50" stroke="#4a8a3a" stroke-width="0.8"/>
<circle cx="187" cy="1031" r="14" fill="url(#gLens)" stroke="#9aa4ae" stroke-width="1.2"/><circle cx="187" cy="1031" r="12.5" fill="none" stroke="#4a88c8" stroke-width="0.8"/><circle cx="199" cy="1043" r="2.5" fill="#eee" stroke="#aaa" stroke-width="0.6"/>
<path d="M177 1031H197" stroke="#1e3a5a" stroke-width="2.5"/><circle cx="177" cy="1031" r="3" fill="#9acb50" stroke="#4a8a3a" stroke-width="0.8"/><circle cx="197" cy="1031" r="3" fill="#9acb50" stroke="#4a8a3a" stroke-width="0.8"/>
<path d="M214 1028H224M215 1029.5H223L219 1033Z" fill="#555" stroke="#555" stroke-width="1"/>
<circle cx="252" cy="1031" r="14" fill="url(#gLens)" stroke="#9aa4ae" stroke-width="1.2"/><circle cx="252" cy="1031" r="12.5" fill="none" stroke="#4a88c8" stroke-width="0.8"/><circle cx="264" cy="1043" r="2.5" fill="#eee" stroke="#aaa" stroke-width="0.6"/>
<path d="M248 1018V1044M256 1018V1044" stroke="#1e3a5a" stroke-width="2.8"/>
<circle cx="296" cy="1031" r="14" fill="url(#gLens)" stroke="#9aa4ae" stroke-width="1.2"/><circle cx="296" cy="1031" r="12.5" fill="none" stroke="#4a88c8" stroke-width="0.8"/><circle cx="308" cy="1043" r="2.5" fill="#eee" stroke="#aaa" stroke-width="0.6"/>
<path d="M283 1027H309M283 1035H309" stroke="#1e3a5a" stroke-width="2.8"/>
<circle cx="339" cy="1031" r="14" fill="url(#gLens)" stroke="#9aa4ae" stroke-width="1.2"/><circle cx="339" cy="1031" r="12.5" fill="none" stroke="#4a88c8" stroke-width="0.8"/><circle cx="351" cy="1043" r="2.5" fill="#eee" stroke="#aaa" stroke-width="0.6"/>
<path d="M339 1017V1031M339 1031H352M339 1031L329 1041M326 1031H333" stroke="#1e3a5a" stroke-width="2.5"/><circle cx="339" cy="1031" r="4" fill="#9acb50" stroke="#4a8a3a" stroke-width="0.8"/>
<circle cx="386" cy="1031" r="14" fill="url(#gLens)" stroke="#9aa4ae" stroke-width="1.2"/><circle cx="386" cy="1031" r="12.5" fill="none" stroke="#4a88c8" stroke-width="0.8"/><circle cx="398" cy="1043" r="2.5" fill="#eee" stroke="#aaa" stroke-width="0.6"/>
<path d="M381 1018V1044M391 1018V1044M373 1026H399M373 1036H399" stroke="#1e3a5a" stroke-width="2.2"/>
<path d="M413 1028H423M414 1029.5H422L418 1033Z" fill="#555" stroke="#555" stroke-width="1"/>
<circle cx="452" cy="1031" r="14" fill="url(#gLens)" stroke="#9aa4ae" stroke-width="1.2"/><circle cx="452" cy="1031" r="12.5" fill="none" stroke="#4a88c8" stroke-width="0.8"/><circle cx="464" cy="1043" r="2.5" fill="#eee" stroke="#aaa" stroke-width="0.6"/>
<text x="452" y="1039" text-anchor="middle" font-family="Liberation Sans" font-size="20" fill="#2a2a5a">EF</text>
<path d="M479 1028H489M480 1029.5H488L484 1033Z" fill="#555" stroke="#555" stroke-width="1"/>
<circle cx="517" cy="1031" r="14" fill="url(#gLens)" stroke="#9aa4ae" stroke-width="1.2"/><circle cx="517" cy="1031" r="12.5" fill="none" stroke="#4a88c8" stroke-width="0.8"/><circle cx="529" cy="1043" r="2.5" fill="#eee" stroke="#aaa" stroke-width="0.6"/>
<path d="M506 1020L528 1042" stroke="#1e3a5a" stroke-width="3.5"/><path d="M515 1029L524 1038" stroke="#e02020" stroke-width="3"/><path d="M522 1036L526 1040" stroke="#f0e020" stroke-width="3"/>
<path d="M544 1028H554M545 1029.5H553L549 1033Z" fill="#555" stroke="#555" stroke-width="1"/>
<path d="M568 1044H596L591 1048H568Z" fill="#9ac050" stroke="#5a7a30" stroke-width="0.6"/><path d="M569 1043L574 1039H596V1044H569Z" fill="#c8e090"/><path d="M569 1019L575 1015V1039L569 1043Z" fill="#3a5aa8"/><rect x="574" y="1015" width="4" height="25" fill="#8ab0e0"/><rect x="585" y="1027" width="4" height="14" fill="#e04060" rx="1"/>
<path d="M610 1019H640L629 1032V1043H621V1032Z" fill="#cfe0e8" stroke="#6a8a9a" stroke-width="1.2"/>
<rect x="655" y="1017" width="14" height="12" fill="none" stroke="#1a88d8" stroke-width="2"/><rect x="655" y="1029" width="14" height="13" fill="none" stroke="#d81868" stroke-width="2"/><path d="M655 1029H669" stroke="#2a3a8a" stroke-width="1.5"/><path d="M672 1020Q684 1027 674 1039" fill="none" stroke="#3a9a3a" stroke-width="1.5"/><path d="M671 1017L676 1021L671 1023Z M671 1036L676 1039L671 1042Z" fill="#3a9a3a"/>
<path d="M700 1024H722V1040H700ZM711 1024V1040M700 1032H722M700 1040V1044M722 1040V1044" fill="none" stroke="#e08090" stroke-width="1.3" opacity="0.8"/><path d="M706 1022A8 8 0 0 1 720 1022" fill="none" stroke="#e09090" stroke-width="2"/>
<rect x="750" y="1018" width="8" height="14" rx="3" fill="#3a9a3a"/><rect x="749" y="1031" width="10" height="4" fill="#222"/><path d="M748 1035H760L764 1046H744Z" fill="#d8e0c8" stroke="#8a9a7a" stroke-width="0.6"/><path d="M744 1046H736" stroke="#fff" stroke-width="1"/>
<path d="M785.5 1018V1045" stroke="#333" stroke-width="1"/><path d="M786.5 1018V1045" stroke="#eee" stroke-width="1"/>
<g><rect x="798" y="1018" width="14" height="11" fill="none" stroke="#1a88d8" stroke-width="2"/><rect x="798" y="1031" width="14" height="12" fill="none" stroke="#d81868" stroke-width="2"/><path d="M798 1030H812" stroke="#2a3a8a" stroke-width="1.5"/>
<path d="M795 1017L814 1029M814 1017L795 1029" stroke="#3a8a3a" stroke-width="1"/>
</g>
<path d="M805 1038A9 9 0 0 1 813 1023M817 1028A9 9 0 0 1 809 1043" fill="none" stroke="#1e3a4a" stroke-width="2.5"/>
<g><rect x="846" y="1018" width="14" height="11" fill="none" stroke="#1a88d8" stroke-width="2"/><rect x="846" y="1031" width="14" height="12" fill="none" stroke="#d81868" stroke-width="2"/><path d="M846 1030H860" stroke="#2a3a8a" stroke-width="1.5"/>
<path d="M843 1017L862 1029M862 1017L843 1029" stroke="#3a8a3a" stroke-width="1"/>
</g>
<path d="M886 1019V1044H909M883 1023L886 1019L889 1023M905 1041L909 1044L905 1047" fill="none" stroke="#a0a8b0" stroke-width="1.5"/>
<g opacity="0.55"><rect x="894" y="1018" width="14" height="11" fill="none" stroke="#1a88d8" stroke-width="2"/><rect x="894" y="1031" width="14" height="12" fill="none" stroke="#d81868" stroke-width="2"/><path d="M894 1030H908" stroke="#2a3a8a" stroke-width="1.5"/>
<path d="M891 1017L910 1029M910 1017L891 1029" stroke="#3a8a3a" stroke-width="1"/>
</g>
<g><rect x="934" y="1018" width="14" height="11" fill="none" stroke="#1a88d8" stroke-width="2"/><rect x="934" y="1031" width="14" height="12" fill="none" stroke="#d81868" stroke-width="2"/><path d="M934 1030H948" stroke="#2a3a8a" stroke-width="1.5"/>
<path d="M931 1030L950 1043M950 1030L931 1043" stroke="#3a8a3a" stroke-width="1"/>
</g>
<g><rect x="984" y="1018" width="14" height="11" fill="none" stroke="#1a88d8" stroke-width="2"/><rect x="984" y="1031" width="14" height="12" fill="none" stroke="#d81868" stroke-width="2"/><path d="M984 1030H998" stroke="#2a3a8a" stroke-width="1.5"/>
<path d="M981 1017L1000 1029M1000 1017L981 1029" stroke="#3a8a3a" stroke-width="1"/>
</g>
<path d="M978 1033A9 9 0 0 1 993 1024" fill="none" stroke="#3a3a9a" stroke-width="2.5"/><path d="M974 1031L979 1038L983 1031Z" fill="#3a3a9a"/>
<path d="M1019 1044V1024L1026 1018H1042V1038L1035 1044M1019 1024H1035V1044M1035 1024L1042 1018M1019 1034H1035L1042 1028M1027 1024V1044" fill="none" stroke="#4a5a7a" stroke-width="2"/>
<path d="M1062 1044V1024L1069 1018H1085V1038L1078 1044M1062 1024H1078V1044M1078 1024L1085 1018M1062 1031H1078L1085 1025M1062 1037H1078" fill="none" stroke="#6a7a9a" stroke-width="1.2"/><path d="M1062 1031H1078L1085 1025M1062 1031V1037M1078 1031V1037" fill="none" stroke="#e02020" stroke-width="1.8"/>
<path d="M1097.5 1018V1045" stroke="#333" stroke-width="1"/><path d="M1098.5 1018V1045" stroke="#eee" stroke-width="1"/>
<path d="M1131 1033L1139 1041" stroke="#111" stroke-width="4" stroke-linecap="round"/><circle cx="1123" cy="1025" r="9" fill="url(#gLens)" stroke="#888" stroke-width="1.5"/><circle cx="1123" cy="1025" r="7" fill="#8ab4e0" opacity="0.6"/>
<path d="M1175 1033L1183 1041" stroke="#111" stroke-width="4" stroke-linecap="round"/><circle cx="1167" cy="1025" r="9" fill="url(#gLens)" stroke="#888" stroke-width="1.5"/><circle cx="1167" cy="1025" r="7" fill="#8ab4e0" opacity="0.6"/>
<path d="M1168 1021L1180 1033M1180 1021L1168 1033" stroke="#e02020" stroke-width="3"/>
<path d="M1195.5 1018V1045" stroke="#333" stroke-width="1"/><path d="M1196.5 1018V1045" stroke="#eee" stroke-width="1"/>
<path d="M1210 1022L1216 1017L1229 1030L1223 1035Z" fill="#6a6a6a"/><path d="M1219 1032L1229 1024L1237 1044H1222Z" fill="#f0d020"/><path d="M1219 1032L1229 1024L1231 1030L1222 1037Z" fill="#d03020"/>
<text x="1262" y="1035" font-family="Liberation Serif" font-style="italic" font-weight="bold" font-size="16" fill="#2a3a6a">L</text><path d="M1256 1037H1279" stroke="#6a8ad8" stroke-width="1" stroke-dasharray="1.5 2"/><circle cx="1256" cy="1037" r="2.5" fill="#9acb50" stroke="#4a8a3a" stroke-width="0.7"/><circle cx="1280" cy="1037" r="2.5" fill="#9acb50" stroke="#4a8a3a" stroke-width="0.7"/>
<path d="M1295 1028H1305M1296 1029.5H1304L1300 1033Z" fill="#555" stroke="#555" stroke-width="1"/>
<path d="M1322 1042L1340 1020L1345 1024L1327 1046Z" fill="#f5c020" stroke="#9a7a20" stroke-width="0.7"/><path d="M1340 1020L1342 1018L1347 1022L1345 1024Z" fill="#e89090"/><path d="M1322 1042L1321 1046L1327 1046Z" fill="#222"/>
<path d="M1364 1019V1046" stroke="#999" stroke-width="1.5"/><path d="M1365 1019Q1375 1016 1387 1021V1028Q1375 1025 1365 1028Z" fill="#3a78c8"/><path d="M1365 1028Q1375 1025 1387 1029V1034Q1375 1031 1365 1034Z" fill="#f0d030"/><path d="M1370 1046L1386 1028L1390 1031L1374 1049Z" fill="#f5d060" stroke="#9a7a30" stroke-width="0.7"/>
<path d="M1442 1044V1017M1439 1022L1442 1016L1445 1022" fill="none" stroke="#e02020" stroke-width="1.8"/><path d="M1442 1044H1467M1462 1041L1468 1044L1462 1047" fill="none" stroke="#1a9a3a" stroke-width="1.8"/><path d="M1442 1044L1462 1024" stroke="#3a3a9a" stroke-width="1.8"/><path d="M1448 1030A9 9 0 0 1 1465 1025M1466 1034A9 9 0 0 1 1450 1040" fill="none" stroke="#1e3a4a" stroke-width="2.2"/>
<path d="M1484 1044V1017M1481 1022L1484 1016L1487 1022" fill="none" stroke="#e02020" stroke-width="1.8"/><path d="M1484 1044H1510M1505 1041L1511 1044L1505 1047" fill="none" stroke="#1a9a3a" stroke-width="1.8"/><path d="M1484 1044L1503 1025M1497 1026L1504 1024L1502 1031" fill="none" stroke="#3a3a9a" stroke-width="1.8"/>
<path d="M1540 1045V1022M1537 1026L1540 1021L1543 1026" fill="none" stroke="#e02020" stroke-width="1.6"/><path d="M1540 1045L1556 1037" stroke="#1a9a3a" stroke-width="1.6"/><path d="M1540 1045L1526 1037" stroke="#3a3a9a" stroke-width="1.6"/><text x="1545" y="1027" font-family="Liberation Sans" font-size="8" fill="#333">Z</text><text x="1552" y="1037" font-family="Liberation Sans" font-size="8" fill="#333">X</text><text x="1525" y="1035" font-family="Liberation Sans" font-size="8" fill="#333">Y</text>
<path d="M1573 1044V1017M1570 1022L1573 1016L1576 1022" fill="none" stroke="#e02020" stroke-width="1.6"/><path d="M1573 1044H1601M1596 1041L1602 1044L1596 1047" fill="none" stroke="#1a9a3a" stroke-width="1.6"/><circle cx="1573" cy="1044" r="2" fill="#2a2a8a"/>
<text x="1578" y="1037" font-family="Liberation Sans" font-size="13" fill="#444" letter-spacing="1">XZ</text>
<path d="M1612 1028H1622M1613 1029.5H1621L1617 1033Z" fill="#555" stroke="#555" stroke-width="1"/>
<rect x="1629.5" y="1011.5" width="63" height="41" rx="2" fill="url(#gOrB)" stroke="#e0b060"/>
<path d="M1638 1044V1017M1635 1022L1638 1016L1641 1022" fill="none" stroke="#3a3a9a" stroke-width="1.6"/><path d="M1638 1044H1666M1661 1041L1667 1044L1661 1047" fill="none" stroke="#1a9a3a" stroke-width="1.6"/><circle cx="1638" cy="1044" r="2" fill="#e02020"/>
<text x="1643" y="1037" font-family="Liberation Sans" font-size="13" fill="#444" letter-spacing="1">XY</text>
<path d="M1679 1028H1689M1680 1029.5H1688L1684 1033Z" fill="#555" stroke="#555" stroke-width="1"/>
<path d="M1705 1044V1017M1702 1022L1705 1016L1708 1022" fill="none" stroke="#e02020" stroke-width="1.6"/><path d="M1705 1044H1733M1728 1041L1734 1044L1728 1047" fill="none" stroke="#3a3a9a" stroke-width="1.6"/><circle cx="1705" cy="1044" r="2" fill="#1a9a3a"/>
<text x="1710" y="1037" font-family="Liberation Sans" font-size="13" fill="#444" letter-spacing="1">YZ</text>
<path d="M1744 1028H1754M1745 1029.5H1753L1749 1033Z" fill="#555" stroke="#555" stroke-width="1"/>
<path d="M1768 1042L1778 1022H1800L1790 1042Z" fill="#cfe0f0" stroke="none"/><path d="M1772 1040L1780 1024M1781 1040L1789 1024M1772 1030H1795M1770 1035H1793" stroke="#3a5a8a" stroke-width="1.8"/>
<path d="M1820 1027A11 11 0 1 0 1833 1019" fill="none" stroke="#1e3a6a" stroke-width="3"/><path d="M1813 1023L1822 1018L1822 1029Z" fill="#1e3a6a"/>
<path d="M1854 1028H1864M1855 1029.5H1863L1859 1033Z" fill="#555" stroke="#555" stroke-width="1"/>
<rect x="781" y="1056" width="1139" height="24" fill="#5a5f68"/>
<rect x="783" y="1058" width="1137" height="22" fill="url(#gSt)"/>
<rect x="791.5" y="1059.5" width="20" height="19" fill="url(#gOrB)" stroke="#c8ccd0"/>
<rect x="812.5" y="1059.5" width="24" height="19" fill="#dcdfe3" stroke="#c8ccd0"/>
<rect x="837.5" y="1059.5" width="23" height="19" fill="#dcdfe3" stroke="#c8ccd0"/>
<rect x="861.5" y="1059.5" width="24" height="19" fill="#dcdfe3" stroke="#c8ccd0"/>
<path d="M796 1075L807 1062L810 1065L799 1077Z" fill="#f0c020" stroke="#8a6a20" stroke-width="0.6"/><path d="M795 1066Q800 1060 806 1064" fill="none" stroke="#3a9a3a" stroke-width="2"/>
<text x="818" y="1077" font-family="Liberation Serif" font-size="14" fill="#2a2a7a">Σ</text><path d="M822 1066Q830 1059 834 1068Q834 1075 828 1076" fill="none" stroke="#3a9a3a" stroke-width="2"/>
<text x="841" y="1077" font-family="Liberation Serif" font-size="13" fill="#2a2a7a">Σδ</text><path d="M846 1066Q853 1059 858 1068" fill="none" stroke="#3a9a3a" stroke-width="2"/>
<path d="M866 1065Q874 1058 880 1068Q880 1076 872 1077" fill="none" stroke="#a8a8a8" stroke-width="2.5"/>
<rect x="886.5" y="1059.5" width="113" height="19" fill="#ececec" stroke="#d0d0d0"/>
<path d="M990 1068H996L993 1071Z" fill="#555"/>
<path d="M1002.5 1058V1080" stroke="#555" stroke-width="1.5"/>
<rect x="1005.5" y="1059.5" width="23" height="19" fill="#dcdfe3" stroke="#c8ccd0"/>
<rect x="1029.5" y="1059.5" width="23" height="19" fill="#dcdfe3" stroke="#c8ccd0"/>
<path d="M1011 1074L1017 1064L1023 1074Z" fill="#3a9a3a"/><path d="M1035 1064H1047L1041 1074Z" fill="#3a9a3a"/>
<rect x="1055.5" y="1059.5" width="132" height="19" fill="#f4f4f4" stroke="#9aa0a8"/>
<path d="M1178 1068H1184L1181 1071Z" fill="#555"/>
<text x="1058" y="1074" font-family="Liberation Sans" font-size="12" fill="#111">13. Сейсмика У</text>
<rect x="1194.5" y="1059.5" width="23" height="19" fill="url(#gOrB)" stroke="#c8ccd0"/>
<rect x="1218.5" y="1059.5" width="23" height="19" fill="#dcdfe3" stroke="#c8ccd0"/>
<rect x="1242.5" y="1059.5" width="23" height="19" fill="#dcdfe3" stroke="#c8ccd0"/>
<rect x="1266.5" y="1059.5" width="24" height="19" fill="#dcdfe3" stroke="#c8ccd0"/>
<rect x="1291.5" y="1059.5" width="24" height="19" fill="#dcdfe3" stroke="#c8ccd0"/>
<path d="M1199 1069L1203 1066L1206 1071L1212 1068" fill="none" stroke="#1e3a5a" stroke-width="1.5"/><path d="M1209 1062V1068M1207 1066L1209 1069L1211 1066" stroke="#1e3a5a" fill="none"/>
<path d="M1224 1066Q1226 1078 1234 1073Q1238 1065 1232 1064Q1228 1066 1236 1062" fill="none" stroke="#8a4a9a" stroke-width="1.3"/>
<path d="M1254 1062V1076M1250 1070L1258 1068" stroke="#aaa" stroke-width="1.5"/>
<path d="M1272 1074L1278.5 1064L1285 1074Z" fill="#3a9a3a"/><path d="M1297 1065H1310L1303.5 1074Z" fill="#aaa"/>
<rect x="1316.5" y="1059.5" width="53" height="19" fill="#f4f4f4" stroke="#9aa0a8"/>
<path d="M1360 1068H1366L1363 1071Z" fill="#555"/>
<text x="1319" y="1074" font-family="Liberation Sans" font-size="12" fill="#111">2</text>
<rect x="1372.5" y="1059.5" width="53" height="19" fill="#f4f4f4" stroke="#9aa0a8"/>
<path d="M1416 1068H1422L1419 1071Z" fill="#555"/>
<text x="1374" y="1074" font-family="Liberation Sans" font-size="12" fill="#111">Средн</text>
<rect x="1433.5" y="1059.5" width="23" height="19" fill="#dcdfe3" stroke="#c8ccd0"/>
<rect x="1457.5" y="1059.5" width="23" height="19" fill="url(#gOrB)" stroke="#c8ccd0"/>
<path d="M1440 1070L1444 1075L1452 1064" fill="none" stroke="#aaa" stroke-width="2"/>
<text x="1460" y="1071" font-family="Liberation Sans" font-size="10" fill="#5a5a2a">№</text><path d="M1462 1070L1467 1076L1477 1063" fill="none" stroke="#3a8a3a" stroke-width="1.8"/>
<path d="M1485.5 1058V1080" stroke="#444" stroke-width="2"/>
<rect x="1489.5" y="1059.5" width="22" height="19" fill="#dcdfe3" stroke="#c8ccd0"/>
<path d="M1494 1077L1505 1065" stroke="#e0a020" stroke-width="2.5"/><path d="M1499 1063L1507 1061L1510 1066L1503 1068Z" fill="#778"/>
<rect x="1513.5" y="1059.5" width="53" height="19" fill="#f4f4f4" stroke="#9aa0a8"/>
<path d="M1557 1068H1563L1560 1071Z" fill="#555"/>
<text x="1516" y="1074" font-family="Liberation Sans" font-size="12" fill="#111">1.</text>
<path d="M1570 1059V1080M1705 1059V1080M1837 1059V1080" stroke="#444" stroke-width="1.5"/>
<text x="1575" y="1074" font-family="Liberation Sans" font-size="12" fill="#111" textLength="65" lengthAdjust="spacingAndGlyphs" xml:space="preserve">Уз.: 0 / 42215</text>
<text x="1708" y="1074" font-family="Liberation Sans" font-size="12" fill="#111" textLength="67" lengthAdjust="spacingAndGlyphs" xml:space="preserve">Эл.: 0 / 51133</text>
<text x="1841" y="1074" font-family="Liberation Sans" font-size="12" fill="#111" textLength="60.5" lengthAdjust="spacingAndGlyphs" xml:space="preserve">Загр.: 1 / 18</text>
</svg>
<svg style="left:0;top:0" width="1920" height="1080" viewBox="0 0 1920 1080">
<defs>
<linearGradient id="gTip" x1="0" y1="0" x2="0" y2="1"><stop offset="0" stop-color="#ffffff"/><stop offset="0.5" stop-color="#eceef2"/><stop offset="1" stop-color="#c9cdd5"/></linearGradient>
<linearGradient id="gWtb" x1="0" y1="0" x2="1" y2="0"><stop offset="0" stop-color="#c4c8cf"/><stop offset="0.35" stop-color="#d0d3d9"/><stop offset="0.8" stop-color="#aab0b8"/><stop offset="1" stop-color="#9499a2"/></linearGradient>
<linearGradient id="gOrW" x1="0" y1="0" x2="0" y2="1"><stop offset="0" stop-color="#fde6c0"/><stop offset="0.5" stop-color="#fbbf70"/><stop offset="0.52" stop-color="#f9b258"/><stop offset="1" stop-color="#fde0a0"/></linearGradient>
<clipPath id="clipW"><rect x="1202" y="629" width="703.5" height="366.5"/></clipPath>
<filter id="shd" x="-10%" y="-10%" width="120%" height="120%"><feGaussianBlur stdDeviation="3"/></filter>
</defs>
<rect x="1415" y="185" width="211" height="70" fill="#000" opacity="0.25" filter="url(#shd)"/>
<rect x="1413.5" y="183.5" width="210" height="69" rx="1.5" fill="url(#gTip)" stroke="#8a8e96"/>
<path d="M1413 184H1624" stroke="#3a3a3a" stroke-width="2"/>
<path d="M1420 191Q1431 205 1442 191" fill="#fff" stroke="#d02020" stroke-width="2.2"/><path d="M1420.5 190.5H1441.5" stroke="#1b3a5a" stroke-width="1.3"/><path d="M1424 192V196M1428 192V198M1432 192V199M1436 192V197" stroke="#d02020" stroke-width="0.8"/>
<circle cx="1420.5" cy="190.5" r="1.6" fill="#9c6" stroke="#4a7a3a" stroke-width="0.5"/><circle cx="1441.5" cy="190.5" r="1.6" fill="#9c6" stroke="#4a7a3a" stroke-width="0.5"/>
<text x="1434" y="211" font-family="Liberation Serif" font-size="15" fill="#222">f</text>
<text x="1449" y="199.5" font-family="Liberation Sans" font-weight="bold" font-size="11.15" fill="#333">Эпюра прогибов</text>
<text x="1449" y="218.5" font-family="Liberation Sans" font-size="11.4" fill="#4a4a4a">Построить эпюру прогибов</text>
<text x="1449" y="231.5" font-family="Liberation Sans" font-size="11.4" fill="#4a4a4a">между указанными узлами</text>
<text x="1449" y="244.5" font-family="Liberation Sans" font-size="11.4" fill="#4a4a4a">пластинчатых КЭ или стержней</text>
<rect x="1600" y="311" width="226" height="316" fill="#000" opacity="0.3" filter="url(#shd)"/>
<rect x="1597.5" y="308.5" width="225" height="315" fill="#f0f0f0" stroke="#a0a0a0"/>
<rect x="1598" y="309" width="224" height="30" fill="#fff"/>
<text x="1606" y="328" font-family="Liberation Sans" font-size="12.5" fill="#808080">Определить прогибы</text>
<path d="M1801.5 317.5L1812.5 328.5M1812.5 317.5L1801.5 328.5" stroke="#888" stroke-width="1"/>
<rect x="1618.5" y="355.5" width="12" height="12" fill="#fff" stroke="#333"/>
<path d="M1620.5 361.5L1623 364.5L1628.5 358" fill="none" stroke="#222" stroke-width="1.2"/>
<text x="1634" y="366" font-family="Liberation Sans" font-size="11.1" fill="#111">Указать опорные узлы</text>
<path d="M1609 386.5H1604.5V504.5H1815.5V386.5H1797" fill="none" stroke="#dcdcdc"/>
<text x="1611" y="390.5" font-family="Liberation Sans" font-size="11.1" fill="#111">Определить прогибы между узлами</text>
<circle cx="1673" cy="409.5" r="6" fill="#fff" stroke="#333" stroke-width="1"/>
<text x="1682" y="414" font-family="Liberation Sans" font-size="11.1" fill="#111">стержней</text>
<circle cx="1673" cy="432" r="6" fill="#fff" stroke="#333" stroke-width="1"/>
<circle cx="1673" cy="432" r="3.3" fill="#222"/>
<text x="1682" y="436.5" font-family="Liberation Sans" font-size="11.1" fill="#111">пластин</text>
<path d="M1625 455.5H1620.5V499.5H1798.5V455.5H1710" fill="none" stroke="#dcdcdc"/>
<text x="1627" y="459.5" font-family="Liberation Sans" font-size="11.1" fill="#111">По направлению</text>
<circle cx="1643.5" cy="479.5" r="6" fill="#fff" stroke="#333" stroke-width="1"/>
<text x="1651" y="484" font-family="Liberation Sans" font-size="11.1" fill="#111">X</text>
<circle cx="1699" cy="479.5" r="6" fill="#fff" stroke="#333" stroke-width="1"/>
<circle cx="1699" cy="479.5" r="3.3" fill="#222"/>
<text x="1707" y="484" font-family="Liberation Sans" font-size="11.1" fill="#111">Y</text>
<circle cx="1759" cy="479.5" r="6" fill="#fff" stroke="#333" stroke-width="1"/>
<text x="1767" y="484" font-family="Liberation Sans" font-size="11.1" fill="#111">Z</text>
<path d="M1609 515.5H1604.5V591.5H1815.5V515.5H1782" fill="none" stroke="#dcdcdc"/>
<text x="1611" y="519.5" font-family="Liberation Sans" font-size="11.1" fill="#111">Наличие опор в начале и в конце</text>
<circle cx="1636" cy="537" r="6" fill="#fff" stroke="#333" stroke-width="1"/>
<text x="1645" y="541" font-family="Liberation Sans" font-size="11.1" fill="#111">Определять автоматически</text>
<circle cx="1636" cy="558" r="6" fill="#fff" stroke="#333" stroke-width="1"/>
<circle cx="1636" cy="558" r="3.3" fill="#222"/>
<text x="1645" y="562.5" font-family="Liberation Sans" font-size="11.1" fill="#111">Назначить</text>
<rect x="1630.5" y="575.5" width="12" height="12" fill="#fff" stroke="#333"/>
<path d="M1632.5 581.5L1635 584.5L1640.5 578" fill="none" stroke="#222" stroke-width="1.2"/>
<text x="1645" y="585" font-family="Liberation Sans" font-size="11.1" fill="#111">Начало</text>
<rect x="1724.5" y="575.5" width="12" height="12" fill="#fff" stroke="#333"/>
<path d="M1726.5 581.5L1729 584.5L1734.5 578" fill="none" stroke="#222" stroke-width="1.2"/>
<text x="1740" y="585" font-family="Liberation Sans" font-size="11.1" fill="#111">Конец</text>
<rect x="1743.5" y="597.5" width="30" height="20" fill="#e1e1e1" stroke="#adadad"/><path d="M1752 601L1765 614M1765 601L1752 614" stroke="#c82020" stroke-width="3"/>
<rect x="1785.5" y="597.5" width="30" height="20" fill="#e1e1e1" stroke="#adadad"/><text x="1800.5" y="614" text-anchor="middle" font-family="Liberation Serif" font-weight="bold" font-size="16" fill="#1a7a2a">?</text>
<rect x="1196" y="624" width="716" height="378" fill="#000" opacity="0.35" filter="url(#shd)"/>
<rect x="1201.5" y="628.5" width="705" height="367" fill="#fff" stroke="#707070"/>
<rect x="1212" y="637" width="15" height="13" fill="#eef" stroke="#8a8a9a" stroke-width="0.8"/><rect x="1213.5" y="639" width="5" height="10" fill="#3a8a6a"/><rect x="1220" y="639" width="4" height="10" fill="#dde"/>
<text x="1233" y="648" font-family="Liberation Sans" font-size="12.1" fill="#111">Эпюра по сечению</text>
<path d="M1787 644.5H1797" stroke="#111" stroke-width="1"/><rect x="1832.5" y="639.5" width="9" height="9" fill="none" stroke="#111"/><path d="M1877.5 639.5L1887.5 649.5M1887.5 639.5L1877.5 649.5" stroke="#111" stroke-width="1"/>
<rect x="1202" y="661" width="47" height="334" fill="url(#gWtb)"/>
<path d="M1211 683L1216 679L1236 684V700L1231 705L1212 700Z" fill="#f2f2f2" stroke="#444" stroke-width="1"/><path d="M1216 679V701M1211 683L1231 688V705M1231 688L1236 684" fill="none" stroke="#666" stroke-width="0.8"/><circle cx="1223" cy="694" r="5" fill="#e0e0e0" stroke="#777" stroke-width="0.8"/><circle cx="1223" cy="694.5" r="2.6" fill="#111"/><circle cx="1219" cy="688" r="1" fill="#444"/>
<rect x="1204.5" y="714.5" width="41" height="42" rx="2" fill="url(#gOrW)" stroke="#e8c080"/>
<path d="M1211.5 724Q1214 731 1220 731Q1226 731 1230 733Q1236 736 1239.5 734" fill="none" stroke="#c02838" stroke-width="1.8"/><path d="M1212.5 727V745M1215.5 730V745M1218.5 731V745M1221.5 731V745M1224.5 731.5V745M1227.5 732V745M1230.5 733V745M1233.5 734.5V745M1236.5 735V745M1239 734.5V745" stroke="#8a3848" stroke-width="0.8"/><path d="M1211 745.5H1240" stroke="#1b3a5a" stroke-width="2"/>
<rect x="1209.0" y="778" width="4.6" height="5" fill="#e02020"/>
<rect x="1213.6" y="778" width="4.6" height="5" fill="#f07020"/>
<rect x="1218.2" y="778" width="4.6" height="5" fill="#f0e020"/>
<rect x="1222.8" y="778" width="4.6" height="5" fill="#40b040"/>
<rect x="1227.4" y="778" width="4.6" height="5" fill="#20a0e0"/>
<rect x="1232.0" y="778" width="4.6" height="5" fill="#2040c0"/>
<rect x="1236.6" y="778" width="4.6" height="5" fill="#a040a0"/>
<rect x="1208.5" y="777.5" width="33" height="6" fill="none" stroke="#666" stroke-width="0.8"/>
<path d="M1210 806L1234 828" stroke="#1e4a6a" stroke-width="4.5"/><path d="M1210 806L1234 828" stroke="#6a9aba" stroke-width="1.2"/><text x="1229" y="817" font-family="Liberation Serif" font-weight="bold" font-size="14" fill="#2a2a6a">1</text><path d="M1213 832H1233" stroke="#eee" stroke-width="1"/>
<path d="M1211 881L1219 857H1238L1230 881Z" fill="none" stroke="#a8acc8" stroke-width="1"/><path d="M1213.7 873H1232.7M1216.3 865H1235.3M1223 857L1215 881M1230 857L1222 881" stroke="#a8acc8" stroke-width="0.8"/>
<rect x="1204.5" y="891.5" width="41" height="41" rx="2" fill="url(#gOrW)" stroke="#e8c080"/>
<path d="M1211 910V899Q1220 897 1228 908Q1232 917 1239 921V910" fill="none" stroke="#b02020" stroke-width="1.8"/><path d="M1211 910H1239" stroke="#1b3a5a" stroke-width="2"/><circle cx="1211" cy="910" r="2" fill="#bde090" stroke="#4a7a3a" stroke-width="0.6"/><circle cx="1239" cy="910" r="2" fill="#bde090" stroke="#4a7a3a" stroke-width="0.6"/>
<text x="1209" y="930" font-family="Liberation Sans" font-size="16" fill="#222">1.2</text>
<text x="1217" y="949" font-family="Liberation Serif" font-weight="bold" font-size="12" fill="#444">max</text><path d="M1212 947V960M1238 960V970" stroke="#777" stroke-width="0.8"/><path d="M1211 960H1239" stroke="#1b3a5a" stroke-width="2"/><path d="M1212 947Q1225 950 1230 962Q1234 970 1238 972" fill="none" stroke="#333" stroke-width="0.8"/><circle cx="1212" cy="947" r="2.2" fill="#c02020"/><circle cx="1238" cy="972" r="2.2" fill="#c02020"/><circle cx="1211" cy="960" r="2" fill="#bde090" stroke="#4a7a3a" stroke-width="0.6"/><circle cx="1239" cy="960" r="2" fill="#bde090" stroke="#4a7a3a" stroke-width="0.6"/>
<g clip-path="url(#clipW)"><rect x="1204.5" y="979.5" width="41" height="20" rx="2" fill="url(#gOrW)" stroke="#e8c080"/><rect x="1211" y="987" width="13" height="9" fill="#fff" stroke="#333" stroke-width="0.8"/><rect x="1226" y="987" width="12" height="9" fill="#fff" stroke="#333" stroke-width="0.8"/><text x="1214" y="996" font-family="Liberation Sans" font-size="11" fill="#222">2</text></g>
<rect x="1202" y="995" width="47" height="1" fill="#8a8a8a"/>
<path d="M1313.3 843V840.8M1318.3 843V838.9M1320.0 843V838.3M1334.4 843V832.9M1356.7 843V824.3M1358.3 843V823.7M1363.3 843V821.8M1366.7 843V820.6M1370.6 843V819.1M1375.0 843V817.5M1377.8 843V816.5M1382.2 843V814.8M1384.4 843V814.1M1398.3 843V810.4M1412.8 843V805.3M1414.4 843V804.7M1419.4 843V803.2M1422.2 843V802.4M1426.1 843V801.4M1430.0 843V800.3M1433.3 843V799.4M1438.3 843V798.2M1440.6 843V797.6M1454.6 843V794.0M1468.3 843V790.5M1470.5 843V789.9M1475.3 843V788.8M1478.6 843V788.0M1482.3 843V786.7M1486.7 843V785.0M1489.5 843V783.9M1494.5 843V780.6M1496.7 843V779.1M1518.6 843V768.0M1532.4 843V760.2M1534.8 843V759.1M1539.0 843V757.2M1542.7 843V755.5M1546.3 843V753.7M1549.9 843V751.9M1553.2 843V750.2M1558.9 843V748.0M1561.3 843V747.3M1574.5 843V743.5M1589.0 843V739.6M1590.8 843V739.2M1596.2 843V737.9M1599.2 843V737.7M1602.8 843V737.5M1606.4 843V737.3M1608.8 843V737.1M1613.1 843V737.0M1616.1 843V737.1M1630.5 843V738.2M1644.5 843V740.9M1646.2 843V741.4M1652.7 843V742.9M1654.3 843V743.6M1658.5 843V745.6M1662.7 843V747.5M1665.7 843V748.9M1670.5 843V751.1M1673.5 843V752.7M1678.9 843V756.3M1680.5 843V757.4M1694.5 843V766.9M1708.7 843V777.4M1710.7 843V778.9M1715.6 843V782.2M1718.5 843V784.1M1722.6 843V786.8M1726.0 843V789.1M1729.5 843V791.4M1734.4 843V795.4M1736.6 843V797.3M1750.6 843V809.2M1764.5 843V814.3M1766.5 843V815.2M1772.0 843V817.8M1774.6 843V819.0M1778.8 843V820.9M1782.7 843V822.7M1785.9 843V823.9M1791.1 843V825.8M1793.0 843V826.5M1806.7 843V832.7M1821.0 843V839.2M1822.9 843V839.7" stroke="#ff6600" stroke-width="1.1"/>
<path d="M1326.7 843V835.8M1341.7 843V830.0M1350.0 843V826.7M1390.9 843V812.4M1406.1 843V807.8M1446.9 843V796.0M1461.8 843V792.1M1503.0 843V775.6M1510.8 843V772.4M1525.8 843V763.5M1566.7 843V745.8M1581.8 843V741.3M1623.3 843V737.2M1638.3 843V739.4M1687.0 843V761.7M1702.0 843V772.4M1743.1 843V803.0M1758.0 843V811.9M1799.3 843V828.9M1813.8 843V836.9" stroke="#ff6600" stroke-width="2"/>
<path d="M1308.0 842.8C1312.2 841.2 1326.3 836.0 1333.3 833.3C1340.3 830.6 1344.4 828.8 1350.0 826.7C1355.6 824.6 1361.2 822.7 1366.7 820.6C1372.2 818.5 1377.8 816.2 1383.3 814.4C1388.8 812.6 1394.4 811.8 1400.0 810.0C1405.6 808.2 1411.2 805.7 1416.7 803.9C1422.2 802.1 1428.7 800.6 1433.3 799.4C1437.9 798.2 1439.6 797.9 1444.4 796.7C1449.2 795.5 1456.0 793.5 1462.0 792.0C1468.0 790.5 1475.5 789.0 1480.1 787.6C1484.7 786.2 1486.3 785.6 1489.7 783.8C1493.1 782.0 1496.7 778.6 1500.5 776.6C1504.3 774.6 1508.2 774.0 1512.6 771.7C1517.0 769.4 1522.2 765.3 1527.0 762.7C1531.8 760.1 1536.7 758.4 1541.5 756.1C1546.3 753.8 1551.1 750.8 1555.9 748.9C1560.7 747.0 1565.9 746.0 1570.3 744.7C1574.7 743.4 1578.0 742.2 1582.4 741.1C1586.8 740.0 1592.0 738.5 1596.8 737.8C1601.6 737.1 1606.9 737.1 1611.3 737.0C1615.7 736.9 1618.9 736.8 1623.3 737.2C1627.7 737.6 1632.8 738.3 1637.7 739.3C1642.7 740.3 1647.2 740.9 1653.0 743.0C1658.8 745.1 1665.9 748.3 1672.4 752.0C1678.9 755.7 1685.4 760.5 1691.9 765.0C1698.4 769.5 1704.8 774.8 1711.3 779.3C1717.8 783.8 1724.3 787.3 1730.8 792.3C1737.3 797.3 1744.8 805.5 1750.2 809.1C1755.6 812.7 1757.8 811.4 1763.2 813.7C1768.6 816.0 1776.2 820.0 1782.7 822.7C1789.2 825.4 1796.7 827.4 1802.1 829.9C1807.5 832.4 1809.7 835.6 1815.1 837.7C1820.5 839.9 1831.3 841.9 1834.6 842.8" fill="none" stroke="#ff6600" stroke-width="2.4" stroke-linejoin="round"/>
<path d="M1307.5 843V762" stroke="#000" stroke-width="1" shape-rendering="crispEdges"/><path d="M1304 767L1307.5 761L1311 767" fill="none" stroke="#000" stroke-width="1"/>
<path d="M1307 843.5H1870" stroke="#000" stroke-width="1.3" shape-rendering="crispEdges"/><path d="M1864 839.5L1871 843.5L1864 847.5" fill="none" stroke="#000" stroke-width="1"/>
<path d="M1611.5 678V957" stroke="#000" stroke-width="1" shape-rendering="crispEdges"/>
<path d="M1305 889.5H1836" stroke="#000" stroke-width="1" shape-rendering="crispEdges"/><path d="M1303 893L1309 886M1833 893L1839 886" fill="none" stroke="#000" stroke-width="1"/>
<text x="1290" y="777" font-family="Liberation Serif" font-weight="bold" font-size="16" fill="#111">м</text>
<text x="1262" y="837.5" font-family="Liberation Serif" font-size="17.7" fill="#0000ff">28323</text>
<text x="1577" y="678" font-family="Liberation Serif" font-size="17.7" fill="#ff6600" textLength="67" lengthAdjust="spacingAndGlyphs">0.000198</text>
<text transform="translate(1615.5,733) rotate(-90)" font-family="Liberation Serif" font-size="18" fill="#ff6600">0.0001</text>
<text x="1813" y="838" font-family="Liberation Serif" font-size="17.7" fill="#0000ff">30599</text>
<g clip-path="url(#clipW)"><text x="1871" y="838" font-family="Liberation Serif" font-size="17.7" fill="#000">L(X'</text>
<text x="1854" y="859.5" font-family="Liberation Serif" font-size="17.7" fill="#000">37.3(м)</text></g>
<text x="1555.5" y="883" font-family="Liberation Serif" font-size="17.7" fill="#000">37.3</text>
<text x="1534" y="904" font-family="Liberation Serif" font-size="17.7" fill="#ff00ff">5.31e-006</text>
<text x="1594.5" y="971" font-family="Liberation Serif" font-size="17.7" fill="#000">21.5</text>
<text x="1407" y="991" font-family="Liberation Serif" font-size="17.7" fill="#000" textLength="293.5" lengthAdjust="spacingAndGlyphs">Эпюра прогибов по Y (Сейсмика У)</text>
<rect x="1906" y="628" width="14" height="370" fill="none"/>
</svg>

</body></html>
